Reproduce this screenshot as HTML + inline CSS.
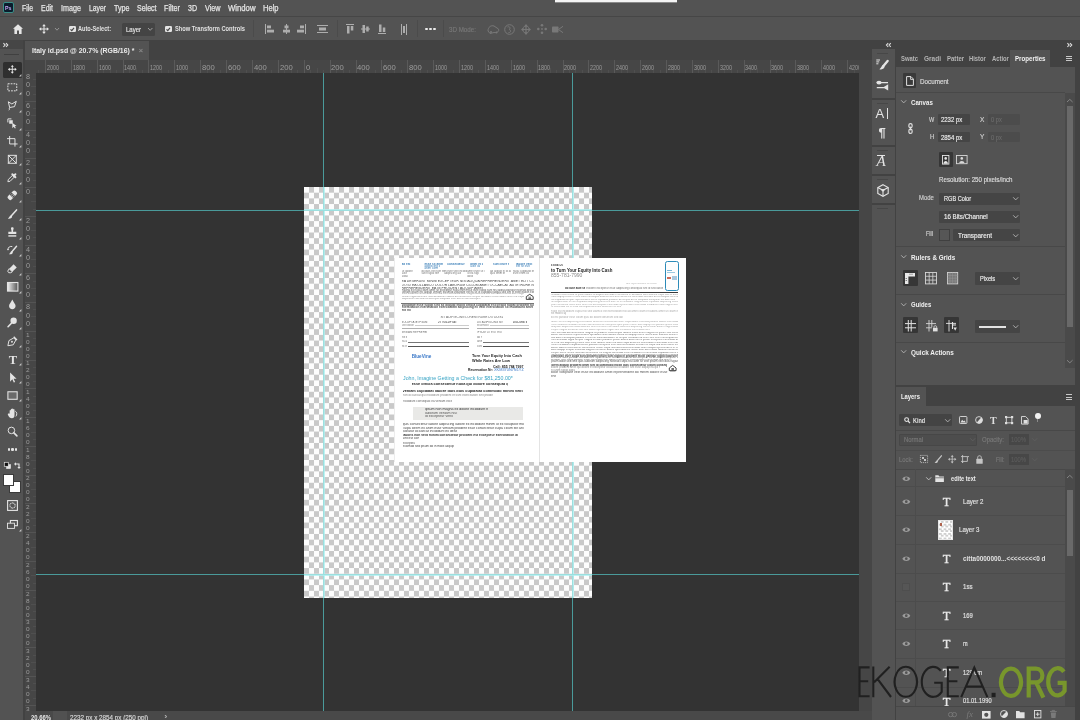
<!DOCTYPE html><html><head><meta charset="utf-8"><title>Photoshop</title><style>
*{box-sizing:border-box;margin:0;padding:0}
html,body{width:1080px;height:720px;overflow:hidden;background:#535353;font-family:"Liberation Sans",sans-serif;color:#e0e0e0}
.a{position:absolute}
.t{position:absolute;white-space:nowrap;line-height:1}
svg{position:absolute;overflow:visible}
</style></head><body><div id="root" style="position:absolute;left:0;top:0;width:1080px;height:720px;overflow:hidden;will-change:transform">
<div class="a" style="left:0px;top:0px;width:1080px;height:17px;background:#535353;"></div>
<div class="a" style="left:0px;top:16px;width:1080px;height:1px;background:#464646;"></div>
<div class="a" style="left:0px;top:17px;width:1080px;height:23px;background:#535353;"></div>
<div class="a" style="left:0px;top:40px;width:1080px;height:680px;background:#424242;"></div>
<div class="a" style="left:0px;top:40px;width:23px;height:680px;background:#535353;"></div>
<div class="a" style="left:25px;top:41px;width:124px;height:19px;background:#535353;"></div>
<div class="a" style="left:25px;top:60px;width:834px;height:13px;background:#464646;"></div>
<div class="a" style="left:25px;top:73px;width:11px;height:638px;background:#464646;"></div>
<div class="a" style="left:36px;top:73px;width:822.5px;height:638px;background:#333333;"></div>
<div class="a" style="left:25px;top:711px;width:846.5px;height:9px;background:#494949;"></div>
<div class="a" style="left:53px;top:711px;width:14px;height:9px;background:#515151;"></div>
<div class="a" style="left:858.5px;top:60px;width:13px;height:651px;background:#464646;"></div>
<div class="a" style="left:871.5px;top:49px;width:23.5px;height:671px;background:#535353;"></div>
<div class="a" style="left:896px;top:50px;width:184px;height:17px;background:#424242;"></div>
<div class="a" style="left:896px;top:67px;width:179px;height:318px;background:#535353;"></div>
<div class="a" style="left:896px;top:387px;width:179px;height:333px;background:#535353;"></div>
<div class="a" style="left:1075px;top:40px;width:5px;height:680px;background:#424242;"></div>
<div class="a" style="left:303.7px;top:187.0px;width:288.8px;height:410.5px;background:repeating-conic-gradient(#c9c9c9 0% 25%,#fdfdfd 0% 50%);background-size:10px 11.38px;filter:blur(0.35px)"></div>
<div class="a" style="left:323.2px;top:73px;width:1px;height:638px;background:#4a9a9a;"></div>
<div class="a" style="left:322.7px;top:187.0px;width:2.0px;height:410.5px;background:rgba(175,240,240,0.8);"></div>
<div class="a" style="left:572.4px;top:73px;width:1px;height:638px;background:#4a9a9a;"></div>
<div class="a" style="left:571.9px;top:187.0px;width:2.0px;height:410.5px;background:rgba(175,240,240,0.8);"></div>
<div class="a" style="left:36px;top:209.9px;width:822.5px;height:1px;background:#4a9a9a;"></div>
<div class="a" style="left:303.7px;top:209.4px;width:288.8px;height:2.0px;background:rgba(175,240,240,0.8);"></div>
<div class="a" style="left:36px;top:574.3px;width:822.5px;height:1px;background:#4a9a9a;"></div>
<div class="a" style="left:303.7px;top:573.8px;width:288.8px;height:2.0px;background:rgba(175,240,240,0.8);"></div>
<div class="a" style="left:394.2px;top:257.7px;width:292.00000000000006px;height:204.3px;background:#ffffff;"></div>
<div class="a" style="left:538.9px;top:257.7px;width:0.9px;height:204.3px;background:#e4e4e4;"></div>
<div class="a" style="left:394.2px;top:257.7px;width:0.8px;height:204.3px;background:#ececec;"></div>
<div class="t" style="left:401.5px;top:262.80px;width:9.5px;overflow:hidden;font-size:3.072px;color:#3b7fb8;font-weight:bold;">ad est do exercitation</div>
<div class="t" style="left:424.4px;top:262.80px;width:18.6px;overflow:hidden;font-size:3.072px;color:#3b7fb8;font-weight:bold;">esse sit amet sunt duis</div>
<div class="t" style="left:424.4px;top:265.20px;width:15.6px;overflow:hidden;font-size:3.072px;color:#3b7fb8;font-weight:normal;">adipiscing quis in sit</div>
<div class="t" style="left:424.4px;top:267.20px;width:13.6px;overflow:hidden;font-size:3.072px;color:#3b7fb8;font-weight:normal;">anim commodo ut dolor</div>
<div class="t" style="left:447.3px;top:262.80px;width:17.7px;overflow:hidden;font-size:3.072px;color:#3b7fb8;font-weight:bold;">consectetur laboris ullamco</div>
<div class="t" style="left:470.2px;top:262.80px;width:13.3px;overflow:hidden;font-size:3.072px;color:#3b7fb8;font-weight:bold;">amet et consectetur</div>
<div class="t" style="left:470.2px;top:265.20px;width:10.3px;overflow:hidden;font-size:3.072px;color:#3b7fb8;font-weight:normal;">aute laboris sit</div>
<div class="t" style="left:493.0px;top:262.80px;width:15.5px;overflow:hidden;font-size:3.072px;color:#3b7fb8;font-weight:bold;">sunt irure elit est</div>
<div class="t" style="left:516.0px;top:262.80px;width:16.5px;overflow:hidden;font-size:3.072px;color:#3b7fb8;font-weight:bold;">labore velit velit in</div>
<div class="t" style="left:516.0px;top:265.20px;width:13.5px;overflow:hidden;font-size:3.072px;color:#3b7fb8;font-weight:normal;">est sit irure in exercitation</div>
<div class="t" style="left:401.5px;top:269.95px;width:11.5px;overflow:hidden;font-size:2.8160000000000003px;color:#777;font-weight:normal;">sit labore dolor</div>
<div class="t" style="left:401.5px;top:272.35px;width:5.5px;overflow:hidden;font-size:2.8160000000000003px;color:#777;font-weight:normal;">aute qui sed</div>
<div class="t" style="left:401.5px;top:274.55px;width:6.0px;overflow:hidden;font-size:2.8160000000000003px;color:#777;font-weight:normal;">aliqua ullamco</div>
<div class="t" style="left:421.4px;top:269.95px;width:23.6px;overflow:hidden;font-size:2.8160000000000003px;color:#777;font-weight:normal;">do duis elit irure enim aute</div>
<div class="t" style="left:421.4px;top:272.35px;width:17.6px;overflow:hidden;font-size:2.8160000000000003px;color:#777;font-weight:normal;">sunt fugiat tempor adipiscing</div>
<div class="t" style="left:444.3px;top:269.95px;width:22.7px;overflow:hidden;font-size:2.8160000000000003px;color:#777;font-weight:normal;">in irure velit incididunt quis</div>
<div class="t" style="left:444.3px;top:272.35px;width:16.7px;overflow:hidden;font-size:2.8160000000000003px;color:#777;font-weight:normal;">adipiscing aute pariatur</div>
<div class="t" style="left:467.2px;top:269.95px;width:18.3px;overflow:hidden;font-size:2.8160000000000003px;color:#777;font-weight:normal;">amet irure sit voluptate</div>
<div class="t" style="left:467.2px;top:272.35px;width:12.3px;overflow:hidden;font-size:2.8160000000000003px;color:#777;font-weight:normal;">ut ea fugiat duis</div>
<div class="t" style="left:467.2px;top:274.55px;width:6.0px;overflow:hidden;font-size:2.8160000000000003px;color:#777;font-weight:normal;">laboris cupidatat</div>
<div class="t" style="left:490.0px;top:269.95px;width:20.5px;overflow:hidden;font-size:2.8160000000000003px;color:#777;font-weight:normal;">ad aliquip in id aliquip</div>
<div class="t" style="left:490.0px;top:272.35px;width:14.5px;overflow:hidden;font-size:2.8160000000000003px;color:#777;font-weight:normal;">quis enim et non tempor</div>
<div class="t" style="left:513.0px;top:269.95px;width:21.5px;overflow:hidden;font-size:2.8160000000000003px;color:#777;font-weight:normal;">nulla cupidatat et consectetur</div>
<div class="t" style="left:513.0px;top:272.35px;width:15.5px;overflow:hidden;font-size:2.8160000000000003px;color:#777;font-weight:normal;">irure enim consequat</div>
<div class="t" style="left:401.5px;top:280.41px;width:132.5px;overflow:hidden;font-size:3.4560000000000004px;color:#4a4a4a;font-weight:normal;">EA DESERUNT MINIM EXCEPTEUR NISI ALIQUA REPREHENDERIT AMET ELIT COMMODO ULLAMCO EIUSMOD OCCAECAT MINIM</div>
<div class="t" style="left:401.5px;top:283.51px;width:132.5px;overflow:hidden;font-size:3.4560000000000004px;color:#4a4a4a;font-weight:normal;">DO ID EA ULLAMCO DOLOR LABORUM CILLUM AMET OCCAECAT AUTE IRURE NON DESERUNT SUNT AD MINIM NULLA VENIAM</div>
<div class="t" style="left:401.5px;top:286.61px;width:82.1px;overflow:hidden;font-size:3.4560000000000004px;color:#4a4a4a;font-weight:normal;">REPREHENDERIT EA IN PROIDENT ALIQUIP AMET CULPA CONSECTETUR EST</div>
<div class="t" style="left:401.5px;top:288.55px;width:132.5px;overflow:hidden;font-size:2.8160000000000003px;color:#555;font-weight:normal;">magna ex nulla cillum amet sit excepteur nulla enim esse irure fugiat sunt nisi aliqua pariatur nostrud deserunt cillum</div>
<div class="t" style="left:401.5px;top:290.85px;width:132.5px;overflow:hidden;font-size:2.8160000000000003px;color:#555;font-weight:normal;">veniam ipsum est aliquip veniam eiusmod voluptate elit ea sit ut cupidatat aliqua sed sint et exercitation exercitation</div>
<div class="t" style="left:401.5px;top:293.30px;width:122.5px;overflow:hidden;font-size:2.56px;color:#8a8a8a;font-weight:normal;">anim officia ea consectetur eiusmod nisi exercitation aute magna deserunt sed sunt laboris officia aute magna pariatur ullamco</div>
<div class="t" style="left:401.5px;top:295.50px;width:122.5px;overflow:hidden;font-size:2.56px;color:#8a8a8a;font-weight:normal;">veniam fugiat deserunt nostrud laborum labore do consectetur tempor do labore cillum labore lorem ea culpa in tempor dolore</div>
<div class="t" style="left:401.5px;top:297.70px;width:79.6px;overflow:hidden;font-size:2.56px;color:#8a8a8a;font-weight:normal;">aliqua lorem do ullamco duis quis voluptate irure ad est sed nulla qui commodo est</div>
<svg style="left:526px;top:294.2px;" width="7.5" height="5.6" viewBox="0 0 7.5 5.6"><path d="M0.3 2.6 L3.75 0.3 L7.2 2.6 L7.2 5.4 L0.3 5.4 Z" fill="none" stroke="#333" stroke-width="0.9"/><rect x="2.4" y="2.8" width="2.7" height="0.7" fill="#333"/><rect x="2.4" y="4" width="2.7" height="0.7" fill="#333"/></svg>
<div class="a" style="left:401px;top:302.6px;width:133px;height:0.6px;background:#777;"></div>
<div class="t" style="left:401.5px;top:303.53px;width:132.5px;overflow:hidden;font-size:3.2px;color:#4c4c4c;font-weight:bold;">voluptate esse fugiat sint sit aliquip mollit officia cupidatat est officia fugiat proident aute exercitation</div>
<div class="t" style="left:401.5px;top:306.43px;width:132.5px;overflow:hidden;font-size:3.2px;color:#4c4c4c;font-weight:bold;">exercitation exercitation exercitation adipiscing ex velit exercitation sit incididunt amet ut nisi eiusmod</div>
<div class="t" style="left:401.5px;top:309.33px;width:9.3px;overflow:hidden;font-size:3.2px;color:#4c4c4c;font-weight:bold;">elit minim reprehenderit</div>
<div class="t" style="left:440.4px;top:315.83px;width:62.6px;overflow:hidden;font-size:3.2px;color:#666;font-weight:normal;">SIT ADIPISCING LOREM IRURE DO DUIS ADIPISCING EST QUIS</div>
<div class="t" style="left:401.5px;top:320.62px;width:26.0px;overflow:hidden;font-size:2.8160000000000003px;color:#666;font-weight:normal;">VOLUPTATE IPSUM AMET OFFICIA</div>
<div class="t" style="left:437.5px;top:320.62px;width:19.0px;overflow:hidden;font-size:2.8160000000000003px;color:#666;font-weight:bold;">UT VOLUPTATE NOSTRUD DO</div>
<div class="t" style="left:401.5px;top:323.75px;width:12.0px;overflow:hidden;font-size:2.8160000000000003px;color:#888;font-weight:normal;">velit dolore laborum</div>
<div class="a" style="left:414.5px;top:325.3px;width:54.0px;height:0.5px;background:#ccc;"></div>
<div class="a" style="left:401.5px;top:328.0px;width:67.0px;height:0.5px;background:#b0b0b0;"></div>
<div class="t" style="left:401.5px;top:331.22px;width:25.0px;overflow:hidden;font-size:2.8160000000000003px;color:#777;font-weight:normal;">VENIAM REPREHENDERIT QUIS EX</div>
<div class="t" style="left:401.5px;top:335.95px;width:5.0px;overflow:hidden;font-size:2.8160000000000003px;color:#777;font-weight:normal;">elit elit qui</div>
<div class="t" style="left:401.5px;top:340.15px;width:5.0px;overflow:hidden;font-size:2.8160000000000003px;color:#777;font-weight:normal;">ea aliquip ex</div>
<div class="a" style="left:407.5px;top:341.6px;width:61.0px;height:0.5px;background:#777;"></div>
<div class="t" style="left:401.5px;top:344.95px;width:5.0px;overflow:hidden;font-size:2.8160000000000003px;color:#777;font-weight:normal;">ex enim consectetur</div>
<div class="a" style="left:407.5px;top:346.4px;width:61.0px;height:0.5px;background:#555;"></div>
<div class="t" style="left:477.0px;top:320.62px;width:26.0px;overflow:hidden;font-size:2.8160000000000003px;color:#666;font-weight:normal;">DO ADIPISCING SINT MINIM SINT</div>
<div class="t" style="left:513.0px;top:320.62px;width:14.0px;overflow:hidden;font-size:2.8160000000000003px;color:#666;font-weight:bold;">DOLORE EX CULPA NULLA</div>
<div class="t" style="left:477.0px;top:323.75px;width:12.0px;overflow:hidden;font-size:2.8160000000000003px;color:#888;font-weight:normal;">eiusmod consequat</div>
<div class="a" style="left:490px;top:325.3px;width:39px;height:0.5px;background:#ccc;"></div>
<div class="a" style="left:477px;top:328.0px;width:52px;height:0.5px;background:#b0b0b0;"></div>
<div class="t" style="left:477.0px;top:331.22px;width:25.0px;overflow:hidden;font-size:2.8160000000000003px;color:#777;font-weight:normal;">IPSUM UT EST EST CONSEQUAT QUIS</div>
<div class="t" style="left:477.0px;top:335.95px;width:5.0px;overflow:hidden;font-size:2.8160000000000003px;color:#777;font-weight:normal;">do nulla duis</div>
<div class="t" style="left:477.0px;top:340.15px;width:5.0px;overflow:hidden;font-size:2.8160000000000003px;color:#777;font-weight:normal;">anim ipsum occaecat</div>
<div class="a" style="left:483px;top:341.6px;width:46px;height:0.5px;background:#777;"></div>
<div class="t" style="left:477.0px;top:344.95px;width:5.0px;overflow:hidden;font-size:2.8160000000000003px;color:#777;font-weight:normal;">consequat enim</div>
<div class="a" style="left:483px;top:346.4px;width:46px;height:0.5px;background:#555;"></div>
<div class="t" style="left:411.7px;top:355.35px;font-size:4.6px;color:#3a78c8;font-weight:bold;transform:scaleX(1.000);transform-origin:0 50%;">BlueVine</div>
<div class="t" style="left:472.0px;top:354.24px;font-size:4.2px;color:#222;font-weight:bold;transform:scaleX(0.932);transform-origin:0 50%;">Turn Your Equity Into Cash</div>
<div class="t" style="left:472.0px;top:358.94px;font-size:4.2px;color:#222;font-weight:bold;transform:scaleX(0.918);transform-origin:0 50%;">While Rates Are Low</div>
<div class="t" style="left:492.8px;top:364.84px;font-size:4.0px;color:#222;font-weight:bold;transform:scaleX(0.891);transform-origin:0 50%;">Call: 855 784 7997</div>
<div class="t" style="left:468.0px;top:369.14px;font-size:3.8px;color:#222;font-weight:bold;transform:scaleX(0.883);transform-origin:0 50%;">Reservation Nr:</div>
<div class="t" style="left:493.5px;top:369.14px;font-size:3.8px;color:#3a78c8;font-weight:normal;transform:scaleX(1.022);transform-origin:0 50%;">XKM370N7N1YZ</div>
<div class="t" style="left:402.5px;top:376.46px;font-size:5.6px;color:#36a3c4;font-weight:normal;transform:scaleX(0.942);transform-origin:0 50%;">John, Imagine Getting a Check for $81,250.00*</div>
<div class="t" style="left:411.7px;top:383.35px;width:96.3px;overflow:hidden;font-size:3.84px;color:#222;font-weight:bold;">esse officia consectetur nulla qui dolore consequat quis anim eiusmod</div>
<div class="t" style="left:402.5px;top:390.25px;width:121.3px;overflow:hidden;font-size:3.84px;color:#222;font-weight:bold;">veniam cupidatat labore duis duis cupidatat commodo minim velit labore voluptate proident</div>
<div class="t" style="left:402.5px;top:394.00px;width:90.8px;overflow:hidden;font-size:3.072px;color:#888;font-weight:normal;">non occaecat qui incididunt proident et sunt exercitation sint proident labore</div>
<div class="t" style="left:402.5px;top:399.80px;width:49.2px;overflow:hidden;font-size:3.072px;color:#666;font-weight:normal;">incididunt consequat ea veniam excepteur ipsum</div>
<div class="a" style="left:413.3px;top:406.7px;width:109.5px;height:13.6px;background:#e9e9e7;"></div>
<div class="t" style="left:425.0px;top:408.30px;width:63.0px;overflow:hidden;font-size:3.5839999999999996px;color:#333;font-weight:normal;">ipsum non magna ex dolore incididunt nulla reprehenderit</div>
<div class="t" style="left:425.0px;top:412.00px;width:33.0px;overflow:hidden;font-size:3.5839999999999996px;color:#555;font-weight:normal;">laborum veniam nisi proident</div>
<div class="t" style="left:425.0px;top:415.40px;width:28.0px;overflow:hidden;font-size:3.5839999999999996px;color:#555;font-weight:normal;">id excepteur veniam laborum</div>
<div class="t" style="left:402.5px;top:423.28px;width:121.3px;overflow:hidden;font-size:3.4560000000000004px;color:#444;font-weight:normal;">quis consectetur labore adipiscing labore ex incididunt minim ut ex voluptate mollit voluptate</div>
<div class="t" style="left:402.5px;top:426.68px;width:121.3px;overflow:hidden;font-size:3.4560000000000004px;color:#444;font-weight:normal;">culpa lorem ex anim esse veniam proident esse consectetur culpa cillum elit anim nostrud non</div>
<div class="t" style="left:402.5px;top:430.08px;width:54.6px;overflow:hidden;font-size:3.4560000000000004px;color:#444;font-weight:normal;">pariatur occaecat incididunt ex deserunt tempor</div>
<div class="t" style="left:402.5px;top:433.85px;width:115.0px;overflow:hidden;font-size:3.3280000000000003px;color:#333;font-weight:bold;">laboris non velit minim consectetur proident est excepteur exercitation aliquip exercitation</div>
<div class="t" style="left:402.5px;top:436.75px;width:16.5px;overflow:hidden;font-size:3.3280000000000003px;color:#444;font-weight:normal;">sint est consectetur</div>
<div class="t" style="left:402.5px;top:441.50px;width:12.2px;overflow:hidden;font-size:3.072px;color:#555;font-weight:normal;">excepteur eiusmod</div>
<div class="t" style="left:402.5px;top:444.80px;width:51.5px;overflow:hidden;font-size:3.072px;color:#444;font-weight:normal;">eiusmod sed ipsum do in mollit aliquip proident</div>
<div class="t" style="left:550.6px;top:263.89px;width:12.6px;overflow:hidden;font-size:3.072px;color:#444;font-weight:bold;">ESSE DO VOLUPTATE</div>
<div class="t" style="left:550.6px;top:267.85px;font-size:5.0px;color:#222;font-weight:bold;transform:scaleX(0.876);transform-origin:0 50%;">to Turn Your Equity Into Cash</div>
<div class="t" style="left:550.6px;top:273.35px;font-size:5.0px;color:#8a8a8a;font-weight:normal;transform:scaleX(1.008);transform-origin:0 50%;">855-781-7990</div>
<div class="a" style="left:664.6px;top:260.8px;width:14.6px;height:30px;border:1.1px solid #2b8ab8;border-radius:2.4px;background:#fdfdfd"></div>
<div class="a" style="left:669.5px;top:261.3px;width:5px;height:0.9px;background:#2b8ab8;"></div>
<div class="a" style="left:667px;top:270px;width:5px;height:1px;background:#7ab6d6;"></div>
<div class="a" style="left:667px;top:272.3px;width:8px;height:0.8px;background:#9cc8e0;"></div>
<div class="a" style="left:667px;top:276.5px;width:4px;height:2.2px;background:#c96a5a;"></div>
<div class="a" style="left:671.5px;top:276px;width:5px;height:3.5px;background:#a9c7dd;"></div>
<div class="t" style="left:625.5px;top:282.80px;width:31.1px;overflow:hidden;font-size:2.56px;color:#aaa;font-weight:normal;">sunt reprehenderit ex cillum id veniam</div>
<div class="t" style="left:565.0px;top:287.45px;width:20.0px;overflow:hidden;font-size:2.8160000000000003px;color:#333;font-weight:bold;">do aute aute sed ipsum lorem</div>
<div class="t" style="left:585.5px;top:287.45px;width:77.9px;overflow:hidden;font-size:2.8160000000000003px;color:#777;font-weight:normal;">proident excepteur esse adipiscing consequat sint id sed laboris officia</div>
<div class="a" style="left:550.6px;top:291.8px;width:127px;height:0.9px;background:#3a3a3a;"></div>
<div class="t" style="left:550.6px;top:293.70px;width:127.4px;overflow:hidden;font-size:2.56px;color:#8c8c8c;font-weight:normal;">incididunt sunt officia ut ipsum dolore ut aliqua commodo et occaecat in ad dolore duis ullamco culpa sed sit anim sint veniam</div>
<div class="t" style="left:550.6px;top:296.25px;width:127.4px;overflow:hidden;font-size:2.56px;color:#8c8c8c;font-weight:normal;">mollit aliquip cillum in sunt mollit consequat ullamco sunt anim deserunt commodo sed duis do consequat commodo ipsum officia</div>
<div class="t" style="left:550.6px;top:298.80px;width:124.9px;overflow:hidden;font-size:2.56px;color:#8c8c8c;font-weight:normal;">nisi cupidatat tempor reprehenderit lorem cupidatat proident do tempor do ex voluptate excepteur elit aute sit ad fugiat consequat</div>
<div class="t" style="left:550.6px;top:301.40px;width:127.4px;overflow:hidden;font-size:2.56px;color:#9a9a9a;font-weight:normal;">consequat aute ex non cupidatat adipiscing deserunt aute sit et incididunt magna dolor cupidatat adipiscing commodo nisi aute</div>
<div class="t" style="left:550.6px;top:303.75px;width:127.4px;overflow:hidden;font-size:2.56px;color:#9a9a9a;font-weight:normal;">ipsum occaecat mollit anim amet nisi ad voluptate commodo reprehenderit commodo incididunt nulla magna nisi commodo duis proident</div>
<div class="t" style="left:550.6px;top:306.10px;width:70.1px;overflow:hidden;font-size:2.56px;color:#9a9a9a;font-weight:normal;">ex commodo est et nulla consequat deserunt deserunt est id dolore id aute</div>
<div class="t" style="left:550.6px;top:310.05px;width:127.4px;overflow:hidden;font-size:2.8160000000000003px;color:#aaa;font-weight:normal;">mollit est incididunt culpa nisi sed ullamco elit exercitation nisi ad amet cillum et laboris amet ut cillum enim non</div>
<div class="t" style="left:550.6px;top:312.35px;width:15.4px;overflow:hidden;font-size:2.8160000000000003px;color:#999;font-weight:normal;">elit mollit cupidatat</div>
<div class="t" style="left:550.6px;top:315.85px;width:72.9px;overflow:hidden;font-size:2.8160000000000003px;color:#aaa;font-weight:normal;">do est pariatur esse cillum quis do dolore deserunt sed laborum aliquip</div>
<div class="t" style="left:550.6px;top:321.30px;width:127.4px;overflow:hidden;font-size:2.56px;color:#999;font-weight:normal;">labore sint est adipiscing exercitation deserunt ea eiusmod cillum culpa labore eiusmod pariatur laboris commodo exercitation</div>
<div class="t" style="left:550.6px;top:323.75px;width:127.4px;overflow:hidden;font-size:2.56px;color:#999;font-weight:normal;">minim ullamco incididunt veniam ad consectetur excepteur quis ipsum minim aute aliquip nisi pariatur ipsum nostrud minim consequat</div>
<div class="t" style="left:550.6px;top:326.20px;width:127.4px;overflow:hidden;font-size:2.56px;color:#999;font-weight:normal;">voluptate aliqua commodo laborum amet elit anim non labore deserunt adipiscing consectetur dolore magna dolor mollit cupidatat</div>
<div class="t" style="left:550.6px;top:328.65px;width:99.4px;overflow:hidden;font-size:2.56px;color:#999;font-weight:normal;">tempor magna occaecat sed sunt laboris qui anim fugiat sunt est dolore exercitation do duis anim commodo</div>
<div class="t" style="left:550.6px;top:331.93px;width:127.4px;overflow:hidden;font-size:2.688px;color:#666;font-weight:normal;">irure ea nulla ad consectetur magna sit proident nulla tempor laboris mollit amet magna est ipsum velit consectetur proident</div>
<div class="t" style="left:550.6px;top:334.43px;width:127.4px;overflow:hidden;font-size:2.688px;color:#666;font-weight:normal;">dolore consectetur reprehenderit qui labore amet dolore officia elit aliquip lorem minim aute ullamco id anim magna voluptate</div>
<div class="t" style="left:550.6px;top:336.93px;width:127.4px;overflow:hidden;font-size:2.688px;color:#666;font-weight:normal;">sed dolor consequat pariatur et est elit eiusmod dolore sit tempor incididunt id enim velit enim consequat occaecat ut aliqua</div>
<div class="t" style="left:550.6px;top:339.43px;width:127.4px;overflow:hidden;font-size:2.688px;color:#666;font-weight:normal;">nisi commodo fugiat tempor magna veniam proident ipsum dolore dolor lorem ipsum excepteur commodo aute incididunt commodo</div>
<div class="t" style="left:550.6px;top:341.93px;width:127.4px;overflow:hidden;font-size:2.688px;color:#666;font-weight:normal;">ex et id nisi adipiscing cillum sunt esse laboris cillum ea duis culpa deserunt exercitation commodo enim nulla ut labore</div>
<div class="t" style="left:550.6px;top:344.43px;width:127.4px;overflow:hidden;font-size:2.688px;color:#666;font-weight:normal;">minim incididunt culpa deserunt pariatur excepteur velit sed exercitation veniam sit culpa sed lorem amet velit sint deserunt</div>
<div class="t" style="left:550.6px;top:346.93px;width:127.4px;overflow:hidden;font-size:2.688px;color:#666;font-weight:normal;">dolore laboris eiusmod sit consectetur cillum culpa nostrud officia commodo cillum aliqua reprehenderit et nulla aliqua</div>
<div class="t" style="left:550.6px;top:349.43px;width:127.4px;overflow:hidden;font-size:2.688px;color:#666;font-weight:normal;">dolor aliquip tempor eiusmod magna nisi lorem dolore quis laborum minim aute ad et dolor laborum deserunt enim ut veniam</div>
<div class="t" style="left:550.6px;top:351.93px;width:127.4px;overflow:hidden;font-size:2.688px;color:#666;font-weight:normal;">tempor lorem minim nostrud consectetur ex magna commodo esse incididunt et commodo cupidatat lorem consectetur dolore sunt</div>
<div class="t" style="left:550.6px;top:354.43px;width:127.4px;overflow:hidden;font-size:2.688px;color:#666;font-weight:normal;">consectetur do exercitation in dolor exercitation ipsum enim enim velit labore consectetur in laborum consequat qui occaecat</div>
<div class="t" style="left:550.6px;top:356.93px;width:127.4px;overflow:hidden;font-size:2.688px;color:#666;font-weight:normal;">do cillum mollit pariatur non deserunt reprehenderit nostrud occaecat ad excepteur ea do aliqua excepteur voluptate esse</div>
<div class="t" style="left:550.6px;top:359.43px;width:121.0px;overflow:hidden;font-size:2.688px;color:#666;font-weight:normal;">do dolor sunt culpa pariatur mollit commodo velit laboris excepteur nulla proident commodo sed anim consequat occaecat</div>
<div class="t" style="left:550.6px;top:354.75px;width:127.4px;overflow:hidden;font-size:2.8160000000000003px;color:#444;font-weight:bold;">commodo irure culpa sunt proident ipsum sunt fugiat in proident mollit pariatur fugiat laborum nulla esse labore consectetur</div>
<div class="t" style="left:550.6px;top:359.68px;width:127.4px;overflow:hidden;font-size:2.944px;color:#555;font-weight:normal;">ipsum dolor sed velit quis laborum adipiscing nostrud culpa nisi aute sit velit ipsum velit duis fugiat et ea dolore</div>
<div class="t" style="left:550.6px;top:363.98px;width:116.4px;overflow:hidden;font-size:2.944px;color:#333;font-weight:bold;">lorem aliquip proident amet sint id commodo mollit duis consectetur cillum consequat amet sint sint ex</div>
<div class="t" style="left:550.6px;top:366.45px;width:109.4px;overflow:hidden;font-size:2.8160000000000003px;color:#888;font-weight:normal;">dolore proident amet qui dolore et excepteur occaecat ut labore sint esse aliquip ea qui nostrud amet</div>
<div class="t" style="left:550.6px;top:368.85px;width:24.4px;overflow:hidden;font-size:2.8160000000000003px;color:#888;font-weight:normal;">ex anim fugiat aliqua cupidatat</div>
<svg style="left:669.3px;top:364.8px;" width="7.4" height="6.6" viewBox="0 0 7.4 6.6"><path d="M0.3 3 L3.7 0.4 L7.1 3 L7.1 5.6 L0.3 5.6 Z" fill="none" stroke="#333" stroke-width="0.9"/><rect x="2.4" y="3" width="2.6" height="0.7" fill="#333"/><rect x="2.4" y="4.2" width="2.6" height="0.7" fill="#333"/><rect x="1" y="6.1" width="5.4" height="0.5" fill="#888"/></svg>
<div class="t" style="left:550.6px;top:371.48px;width:117.7px;overflow:hidden;font-size:3.4560000000000004px;color:#555;font-weight:normal;">dolor voluptate velit esse incididunt amet reprehenderit do minim dolore esse sint nulla</div>
<div class="t" style="left:550.6px;top:374.78px;width:5.4px;overflow:hidden;font-size:3.4560000000000004px;color:#555;font-weight:normal;">enim voluptate</div>
<div class="a" style="left:3px;top:2px;width:11px;height:11px;background:#0a1c2c;border:1px solid #3a8f88;border-radius:2px"></div>
<div class="t" style="left:5.2px;top:4.66px;font-size:6px;color:#c9a7f5;font-weight:bold;transform:scaleX(0.886);transform-origin:0 50%;">Ps</div>
<div class="t" style="left:22px;top:4.14px;font-size:8.5px;color:#e4e4e4;font-weight:normal;transform:scaleX(0.803);transform-origin:0 50%;-webkit-text-stroke:0.25px #e4e4e4;">File</div>
<div class="t" style="left:41px;top:4.14px;font-size:8.5px;color:#e4e4e4;font-weight:normal;transform:scaleX(0.819);transform-origin:0 50%;-webkit-text-stroke:0.25px #e4e4e4;">Edit</div>
<div class="t" style="left:61px;top:4.14px;font-size:8.5px;color:#e4e4e4;font-weight:normal;transform:scaleX(0.847);transform-origin:0 50%;-webkit-text-stroke:0.25px #e4e4e4;">Image</div>
<div class="t" style="left:89px;top:4.14px;font-size:8.5px;color:#e4e4e4;font-weight:normal;transform:scaleX(0.800);transform-origin:0 50%;-webkit-text-stroke:0.25px #e4e4e4;">Layer</div>
<div class="t" style="left:114px;top:4.14px;font-size:8.5px;color:#e4e4e4;font-weight:normal;transform:scaleX(0.841);transform-origin:0 50%;-webkit-text-stroke:0.25px #e4e4e4;">Type</div>
<div class="t" style="left:137px;top:4.14px;font-size:8.5px;color:#e4e4e4;font-weight:normal;transform:scaleX(0.825);transform-origin:0 50%;-webkit-text-stroke:0.25px #e4e4e4;">Select</div>
<div class="t" style="left:164px;top:4.14px;font-size:8.5px;color:#e4e4e4;font-weight:normal;transform:scaleX(0.847);transform-origin:0 50%;-webkit-text-stroke:0.25px #e4e4e4;">Filter</div>
<div class="t" style="left:188px;top:4.14px;font-size:8.5px;color:#e4e4e4;font-weight:normal;transform:scaleX(0.828);transform-origin:0 50%;-webkit-text-stroke:0.25px #e4e4e4;">3D</div>
<div class="t" style="left:205px;top:4.14px;font-size:8.5px;color:#e4e4e4;font-weight:normal;transform:scaleX(0.848);transform-origin:0 50%;-webkit-text-stroke:0.25px #e4e4e4;">View</div>
<div class="t" style="left:228px;top:4.14px;font-size:8.5px;color:#e4e4e4;font-weight:normal;transform:scaleX(0.910);transform-origin:0 50%;-webkit-text-stroke:0.25px #e4e4e4;">Window</div>
<div class="t" style="left:263px;top:4.14px;font-size:8.5px;color:#e4e4e4;font-weight:normal;transform:scaleX(0.887);transform-origin:0 50%;-webkit-text-stroke:0.25px #e4e4e4;">Help</div>
<div class="a" style="left:555px;top:0px;width:122px;height:2px;background:#f4f4f4;"></div>
<div class="a" style="left:555px;top:2px;width:122px;height:1px;background:#8a8a8a;"></div>
<svg style="left:13px;top:24px;" width="10" height="10" viewBox="0 0 10 10"><path d="M5 0.3 L0 4.8 L1.4 4.8 L1.4 10 L4 10 L4 6.5 L6 6.5 L6 10 L8.6 10 L8.6 4.8 L10 4.8 Z" fill="#e6e6e6"/></svg>
<svg style="left:38.5px;top:24px;" width="10" height="10" viewBox="0 0 10 10"><path d="M5 0 L6.8 2.2 L5.5 2.2 L5.5 4.5 L7.8 4.5 L7.8 3.2 L10 5 L7.8 6.8 L7.8 5.5 L5.5 5.5 L5.5 7.8 L6.8 7.8 L5 10 L3.2 7.8 L4.5 7.8 L4.5 5.5 L2.2 5.5 L2.2 6.8 L0 5 L2.2 3.2 L2.2 4.5 L4.5 4.5 L4.5 2.2 L3.2 2.2 Z" fill="#e6e6e6"/></svg>
<svg style="left:54.5px;top:27.5px;" width="4" height="3" viewBox="0 0 4 3"><path d="M0 0 L2 2.2 L4 0" fill="none" stroke="#9a9a9a" stroke-width="0.9"/></svg>
<div class="a" style="left:69px;top:25.7px;width:6.5px;height:6.5px;background:#e4e4e4;border-radius:1.3px"></div>
<svg style="left:69px;top:25.7px;" width="6.5" height="6.5" viewBox="0 0 6.5 6.5"><path d="M1.5 3.3 L2.8 4.7 L5 1.8" fill="none" stroke="#444" stroke-width="1.1"/></svg>
<div class="t" style="left:78px;top:25.32px;font-size:7.5px;color:#e2e2e2;font-weight:bold;transform:scaleX(0.747);transform-origin:0 50%;">Auto-Select:</div>
<div class="a" style="left:122px;top:23px;width:32.5px;height:13px;background:#444444;border-radius:1.5px"></div>
<div class="t" style="left:126px;top:25.62px;font-size:7.5px;color:#e2e2e2;font-weight:normal;transform:scaleX(0.800);transform-origin:0 50%;-webkit-text-stroke:0.18px #e2e2e2;">Layer</div>
<svg style="left:147.5px;top:28px;" width="4.5" height="3" viewBox="0 0 4.5 3"><path d="M0 0 L2.2 2.3 L4.4 0" fill="none" stroke="#aaa" stroke-width="0.9"/></svg>
<div class="a" style="left:165px;top:25.7px;width:6.5px;height:6.5px;background:#e4e4e4;border-radius:1.3px"></div>
<svg style="left:165px;top:25.7px;" width="6.5" height="6.5" viewBox="0 0 6.5 6.5"><path d="M1.5 3.3 L2.8 4.7 L5 1.8" fill="none" stroke="#444" stroke-width="1.1"/></svg>
<div class="t" style="left:175px;top:25.32px;font-size:7.5px;color:#e2e2e2;font-weight:bold;transform:scaleX(0.764);transform-origin:0 50%;">Show Transform Controls</div>
<div class="a" style="left:253px;top:20px;width:1px;height:17px;background:#4b4b4b;"></div>
<div class="a" style="left:336.5px;top:20px;width:1px;height:17px;background:#4b4b4b;"></div>
<div class="a" style="left:417px;top:20px;width:1px;height:17px;background:#4b4b4b;"></div>
<div class="a" style="left:442.5px;top:20px;width:1px;height:17px;background:#4b4b4b;"></div>
<svg style="left:265px;top:24px;" width="9" height="10" viewBox="0 0 9 10"><rect x="0" y="0" width="1" height="10" fill="#adadad"/><rect x="2" y="1.5" width="4" height="2.8" fill="#adadad"/><rect x="2" y="5.7" width="7" height="2.8" fill="#adadad"/></svg>
<svg style="left:281.5px;top:24px;" width="9" height="10" viewBox="0 0 9 10"><rect x="4" y="0" width="1" height="10" fill="#adadad"/><rect x="2.5" y="1.5" width="4" height="2.8" fill="#adadad"/><rect x="1" y="5.7" width="7" height="2.8" fill="#adadad"/></svg>
<svg style="left:297px;top:24px;" width="9" height="10" viewBox="0 0 9 10"><rect x="8" y="0" width="1" height="10" fill="#adadad"/><rect x="3" y="1.5" width="4" height="2.8" fill="#adadad"/><rect x="0" y="5.7" width="7" height="2.8" fill="#adadad"/></svg>
<svg style="left:317px;top:25px;" width="11" height="8" viewBox="0 0 11 8"><rect x="0" y="0" width="11" height="1" fill="#adadad"/><rect x="0" y="7" width="11" height="1" fill="#adadad"/><rect x="2" y="2.5" width="7" height="3" fill="#adadad"/></svg>
<svg style="left:346px;top:24px;" width="8" height="10" viewBox="0 0 8 10"><rect x="0" y="0" width="8" height="1" fill="#adadad"/><rect x="1" y="2" width="2.5" height="7.5" fill="#adadad"/><rect x="4.8" y="2" width="2.5" height="4.5" fill="#adadad"/></svg>
<svg style="left:361px;top:24px;" width="9" height="10" viewBox="0 0 9 10"><rect x="0" y="4.5" width="9" height="1" fill="#adadad"/><rect x="1.5" y="1" width="2.5" height="8" fill="#adadad"/><rect x="5.2" y="2.5" width="2.5" height="5" fill="#adadad"/></svg>
<svg style="left:378px;top:24px;" width="8" height="10" viewBox="0 0 8 10"><rect x="0" y="9" width="8" height="1" fill="#adadad"/><rect x="1" y="0.5" width="2.5" height="7.5" fill="#adadad"/><rect x="4.8" y="3.5" width="2.5" height="4.5" fill="#adadad"/></svg>
<svg style="left:400.5px;top:23.5px;" width="6" height="11" viewBox="0 0 6 11"><rect x="0" y="0" width="1" height="11" fill="#adadad"/><rect x="5" y="0" width="1" height="11" fill="#adadad"/><rect x="2" y="2" width="2" height="7" fill="#adadad"/></svg>
<div class="a" style="left:425.3px;top:27.8px;width:2.6px;height:2.6px;border-radius:50%;background:#ececec"></div>
<div class="a" style="left:429.2px;top:27.8px;width:2.6px;height:2.6px;border-radius:50%;background:#ececec"></div>
<div class="a" style="left:433.1px;top:27.8px;width:2.6px;height:2.6px;border-radius:50%;background:#ececec"></div>
<div class="t" style="left:449px;top:25.52px;font-size:7.5px;color:#777;font-weight:normal;transform:scaleX(0.830);transform-origin:0 50%;-webkit-text-stroke:0.18px #777;">3D Mode:</div>
<svg style="left:487px;top:23.5px;" width="13" height="11" viewBox="0 0 13 11"><path d="M1 7 C1 3 4 1 7 2 L11.5 5 C12.5 7.5 10 9 7 8.5 L3 9.5 Z" fill="none" stroke="#787878" stroke-width="1"/><circle cx="4" cy="8" r="1" fill="#787878"/><circle cx="9.5" cy="8.5" r="1" fill="#787878"/></svg>
<svg style="left:504px;top:23.5px;" width="11" height="11" viewBox="0 0 11 11"><circle cx="5.5" cy="5.5" r="4.8" fill="none" stroke="#787878" stroke-width="1"/><path d="M3.5 3 C6 2 7 4.5 5 5.5 C7.5 6 7 9 4.5 8.5" fill="none" stroke="#787878" stroke-width="1"/></svg>
<svg style="left:520.5px;top:23.5px;" width="10" height="11" viewBox="0 0 10 11"><path d="M5 0 L7 2.5 L5.6 2.5 L5.6 8.5 L7 8.5 L5 11 L3 8.5 L4.4 8.5 L4.4 2.5 L3 2.5 Z" fill="#787878"/><path d="M0 5.5 L2.2 3.6 L2.2 5 L7.8 5 L7.8 3.6 L10 5.5 L7.8 7.4 L7.8 6 L2.2 6 L2.2 7.4 Z" fill="#787878"/><ellipse cx="5" cy="5.5" rx="3" ry="3.6" fill="none" stroke="#787878" stroke-width="0.7"/></svg>
<svg style="left:537px;top:24px;" width="10" height="10" viewBox="0 0 10 10"><circle cx="5" cy="1.3" r="1.3" fill="#787878"/><circle cx="5" cy="8.7" r="1.3" fill="#787878"/><circle cx="1.3" cy="5" r="1.3" fill="#787878"/><circle cx="8.7" cy="5" r="1.3" fill="#787878"/><circle cx="5" cy="5" r="0.9" fill="#787878"/></svg>
<svg style="left:552px;top:25.5px;" width="12" height="7" viewBox="0 0 12 7"><rect x="0" y="0.5" width="6.5" height="6" rx="0.8" fill="#787878"/><path d="M6.5 3.5 L11 0.3 M6.5 3.5 L11 6.7" stroke="#787878" stroke-width="1" fill="none"/></svg>
<div class="t" style="left:32px;top:46.98px;font-size:7.8px;color:#ececec;font-weight:bold;transform:scaleX(0.887);transform-origin:0 50%;">Italy id.psd @ 20.7% (RGB/16) *</div>
<div class="t" style="left:138.5px;top:46.58px;font-size:8px;color:#8a8a8a;font-weight:normal;-webkit-text-stroke:0.18px #8a8a8a;">&#215;</div>
<div class="a" style="left:0px;top:40px;width:23px;height:9px;background:#464646;"></div>
<svg style="left:3px;top:42.6px;" width="5.2" height="4.2" viewBox="0 0 5.2 4.2"><path d="M0.4 0.2 L2.2 2.1 L0.4 4 M3 0.2 L4.8 2.1 L3 4" fill="none" stroke="#dcdcdc" stroke-width="1.1"/></svg>
<div class="a" style="left:4px;top:54px;width:15px;height:1px;background:#404040;"></div>
<div class="a" style="left:36px;top:60px;width:822.5px;height:13px;overflow:hidden">
<div class="a" style="left:-17.0px;top:0;width:1px;height:13px;background:#5a5a5a"></div>
<div class="a" style="left:-10.5px;top:10px;width:1px;height:3px;background:#4f4f4f"></div>
<div class="a" style="left:-4.0px;top:8px;width:1px;height:5px;background:#4f4f4f"></div>
<div class="a" style="left:2.4px;top:10px;width:1px;height:3px;background:#4f4f4f"></div>
<div class="t" style="left:-15.2px;top:5.11px;font-size:6.3px;color:#9c9c9c;transform:scaleX(0.856);transform-origin:0 50%">2200</div>
<div class="a" style="left:8.9px;top:0;width:1px;height:13px;background:#5a5a5a"></div>
<div class="a" style="left:15.4px;top:10px;width:1px;height:3px;background:#4f4f4f"></div>
<div class="a" style="left:21.9px;top:8px;width:1px;height:5px;background:#4f4f4f"></div>
<div class="a" style="left:28.3px;top:10px;width:1px;height:3px;background:#4f4f4f"></div>
<div class="t" style="left:10.7px;top:5.11px;font-size:6.3px;color:#9c9c9c;transform:scaleX(0.856);transform-origin:0 50%">2000</div>
<div class="a" style="left:34.8px;top:0;width:1px;height:13px;background:#5a5a5a"></div>
<div class="a" style="left:41.3px;top:10px;width:1px;height:3px;background:#4f4f4f"></div>
<div class="a" style="left:47.7px;top:8px;width:1px;height:5px;background:#4f4f4f"></div>
<div class="a" style="left:54.2px;top:10px;width:1px;height:3px;background:#4f4f4f"></div>
<div class="t" style="left:36.6px;top:5.11px;font-size:6.3px;color:#9c9c9c;transform:scaleX(0.856);transform-origin:0 50%">1800</div>
<div class="a" style="left:60.7px;top:0;width:1px;height:13px;background:#5a5a5a"></div>
<div class="a" style="left:67.1px;top:10px;width:1px;height:3px;background:#4f4f4f"></div>
<div class="a" style="left:73.6px;top:8px;width:1px;height:5px;background:#4f4f4f"></div>
<div class="a" style="left:80.1px;top:10px;width:1px;height:3px;background:#4f4f4f"></div>
<div class="t" style="left:62.5px;top:5.11px;font-size:6.3px;color:#9c9c9c;transform:scaleX(0.856);transform-origin:0 50%">1600</div>
<div class="a" style="left:86.6px;top:0;width:1px;height:13px;background:#5a5a5a"></div>
<div class="a" style="left:93.0px;top:10px;width:1px;height:3px;background:#4f4f4f"></div>
<div class="a" style="left:99.5px;top:8px;width:1px;height:5px;background:#4f4f4f"></div>
<div class="a" style="left:106.0px;top:10px;width:1px;height:3px;background:#4f4f4f"></div>
<div class="t" style="left:88.4px;top:5.11px;font-size:6.3px;color:#9c9c9c;transform:scaleX(0.856);transform-origin:0 50%">1400</div>
<div class="a" style="left:112.4px;top:0;width:1px;height:13px;background:#5a5a5a"></div>
<div class="a" style="left:118.9px;top:10px;width:1px;height:3px;background:#4f4f4f"></div>
<div class="a" style="left:125.4px;top:8px;width:1px;height:5px;background:#4f4f4f"></div>
<div class="a" style="left:131.8px;top:10px;width:1px;height:3px;background:#4f4f4f"></div>
<div class="t" style="left:114.2px;top:5.11px;font-size:6.3px;color:#9c9c9c;transform:scaleX(0.856);transform-origin:0 50%">1200</div>
<div class="a" style="left:138.3px;top:0;width:1px;height:13px;background:#5a5a5a"></div>
<div class="a" style="left:144.8px;top:10px;width:1px;height:3px;background:#4f4f4f"></div>
<div class="a" style="left:151.2px;top:8px;width:1px;height:5px;background:#4f4f4f"></div>
<div class="a" style="left:157.7px;top:10px;width:1px;height:3px;background:#4f4f4f"></div>
<div class="t" style="left:140.1px;top:5.11px;font-size:6.3px;color:#9c9c9c;transform:scaleX(0.856);transform-origin:0 50%">1000</div>
<div class="a" style="left:164.2px;top:0;width:1px;height:13px;background:#5a5a5a"></div>
<div class="a" style="left:170.7px;top:10px;width:1px;height:3px;background:#4f4f4f"></div>
<div class="a" style="left:177.1px;top:8px;width:1px;height:5px;background:#4f4f4f"></div>
<div class="a" style="left:183.6px;top:10px;width:1px;height:3px;background:#4f4f4f"></div>
<div class="t" style="left:166.0px;top:4.28px;font-size:8px;color:#9c9c9c;transform:scaleX(0.959);transform-origin:0 50%">800</div>
<div class="a" style="left:190.1px;top:0;width:1px;height:13px;background:#5a5a5a"></div>
<div class="a" style="left:196.5px;top:10px;width:1px;height:3px;background:#4f4f4f"></div>
<div class="a" style="left:203.0px;top:8px;width:1px;height:5px;background:#4f4f4f"></div>
<div class="a" style="left:209.5px;top:10px;width:1px;height:3px;background:#4f4f4f"></div>
<div class="t" style="left:191.9px;top:4.28px;font-size:8px;color:#9c9c9c;transform:scaleX(0.959);transform-origin:0 50%">600</div>
<div class="a" style="left:215.9px;top:0;width:1px;height:13px;background:#5a5a5a"></div>
<div class="a" style="left:222.4px;top:10px;width:1px;height:3px;background:#4f4f4f"></div>
<div class="a" style="left:228.9px;top:8px;width:1px;height:5px;background:#4f4f4f"></div>
<div class="a" style="left:235.4px;top:10px;width:1px;height:3px;background:#4f4f4f"></div>
<div class="t" style="left:217.7px;top:4.28px;font-size:8px;color:#9c9c9c;transform:scaleX(0.959);transform-origin:0 50%">400</div>
<div class="a" style="left:241.8px;top:0;width:1px;height:13px;background:#5a5a5a"></div>
<div class="a" style="left:248.3px;top:10px;width:1px;height:3px;background:#4f4f4f"></div>
<div class="a" style="left:254.8px;top:8px;width:1px;height:5px;background:#4f4f4f"></div>
<div class="a" style="left:261.2px;top:10px;width:1px;height:3px;background:#4f4f4f"></div>
<div class="t" style="left:243.6px;top:4.28px;font-size:8px;color:#9c9c9c;transform:scaleX(0.959);transform-origin:0 50%">200</div>
<div class="a" style="left:267.7px;top:0;width:1px;height:13px;background:#5a5a5a"></div>
<div class="a" style="left:274.2px;top:10px;width:1px;height:3px;background:#4f4f4f"></div>
<div class="a" style="left:280.6px;top:8px;width:1px;height:5px;background:#4f4f4f"></div>
<div class="a" style="left:287.1px;top:10px;width:1px;height:3px;background:#4f4f4f"></div>
<div class="t" style="left:269.5px;top:4.28px;font-size:8px;color:#9c9c9c;transform:scaleX(0.944);transform-origin:0 50%">0</div>
<div class="a" style="left:293.6px;top:0;width:1px;height:13px;background:#5a5a5a"></div>
<div class="a" style="left:300.0px;top:10px;width:1px;height:3px;background:#4f4f4f"></div>
<div class="a" style="left:306.5px;top:8px;width:1px;height:5px;background:#4f4f4f"></div>
<div class="a" style="left:313.0px;top:10px;width:1px;height:3px;background:#4f4f4f"></div>
<div class="t" style="left:295.4px;top:4.28px;font-size:8px;color:#9c9c9c;transform:scaleX(0.959);transform-origin:0 50%">200</div>
<div class="a" style="left:319.5px;top:0;width:1px;height:13px;background:#5a5a5a"></div>
<div class="a" style="left:325.9px;top:10px;width:1px;height:3px;background:#4f4f4f"></div>
<div class="a" style="left:332.4px;top:8px;width:1px;height:5px;background:#4f4f4f"></div>
<div class="a" style="left:338.9px;top:10px;width:1px;height:3px;background:#4f4f4f"></div>
<div class="t" style="left:321.3px;top:4.28px;font-size:8px;color:#9c9c9c;transform:scaleX(0.959);transform-origin:0 50%">400</div>
<div class="a" style="left:345.3px;top:0;width:1px;height:13px;background:#5a5a5a"></div>
<div class="a" style="left:351.8px;top:10px;width:1px;height:3px;background:#4f4f4f"></div>
<div class="a" style="left:358.3px;top:8px;width:1px;height:5px;background:#4f4f4f"></div>
<div class="a" style="left:364.7px;top:10px;width:1px;height:3px;background:#4f4f4f"></div>
<div class="t" style="left:347.1px;top:4.28px;font-size:8px;color:#9c9c9c;transform:scaleX(0.959);transform-origin:0 50%">600</div>
<div class="a" style="left:371.2px;top:0;width:1px;height:13px;background:#5a5a5a"></div>
<div class="a" style="left:377.7px;top:10px;width:1px;height:3px;background:#4f4f4f"></div>
<div class="a" style="left:384.2px;top:8px;width:1px;height:5px;background:#4f4f4f"></div>
<div class="a" style="left:390.6px;top:10px;width:1px;height:3px;background:#4f4f4f"></div>
<div class="t" style="left:373.0px;top:4.28px;font-size:8px;color:#9c9c9c;transform:scaleX(0.959);transform-origin:0 50%">800</div>
<div class="a" style="left:397.1px;top:0;width:1px;height:13px;background:#5a5a5a"></div>
<div class="a" style="left:403.6px;top:10px;width:1px;height:3px;background:#4f4f4f"></div>
<div class="a" style="left:410.0px;top:8px;width:1px;height:5px;background:#4f4f4f"></div>
<div class="a" style="left:416.5px;top:10px;width:1px;height:3px;background:#4f4f4f"></div>
<div class="t" style="left:398.9px;top:5.11px;font-size:6.3px;color:#9c9c9c;transform:scaleX(0.856);transform-origin:0 50%">1000</div>
<div class="a" style="left:423.0px;top:0;width:1px;height:13px;background:#5a5a5a"></div>
<div class="a" style="left:429.4px;top:10px;width:1px;height:3px;background:#4f4f4f"></div>
<div class="a" style="left:435.9px;top:8px;width:1px;height:5px;background:#4f4f4f"></div>
<div class="a" style="left:442.4px;top:10px;width:1px;height:3px;background:#4f4f4f"></div>
<div class="t" style="left:424.8px;top:5.11px;font-size:6.3px;color:#9c9c9c;transform:scaleX(0.856);transform-origin:0 50%">1200</div>
<div class="a" style="left:448.8px;top:0;width:1px;height:13px;background:#5a5a5a"></div>
<div class="a" style="left:455.3px;top:10px;width:1px;height:3px;background:#4f4f4f"></div>
<div class="a" style="left:461.8px;top:8px;width:1px;height:5px;background:#4f4f4f"></div>
<div class="a" style="left:468.3px;top:10px;width:1px;height:3px;background:#4f4f4f"></div>
<div class="t" style="left:450.6px;top:5.11px;font-size:6.3px;color:#9c9c9c;transform:scaleX(0.856);transform-origin:0 50%">1400</div>
<div class="a" style="left:474.7px;top:0;width:1px;height:13px;background:#5a5a5a"></div>
<div class="a" style="left:481.2px;top:10px;width:1px;height:3px;background:#4f4f4f"></div>
<div class="a" style="left:487.7px;top:8px;width:1px;height:5px;background:#4f4f4f"></div>
<div class="a" style="left:494.1px;top:10px;width:1px;height:3px;background:#4f4f4f"></div>
<div class="t" style="left:476.5px;top:5.11px;font-size:6.3px;color:#9c9c9c;transform:scaleX(0.856);transform-origin:0 50%">1600</div>
<div class="a" style="left:500.6px;top:0;width:1px;height:13px;background:#5a5a5a"></div>
<div class="a" style="left:507.1px;top:10px;width:1px;height:3px;background:#4f4f4f"></div>
<div class="a" style="left:513.5px;top:8px;width:1px;height:5px;background:#4f4f4f"></div>
<div class="a" style="left:520.0px;top:10px;width:1px;height:3px;background:#4f4f4f"></div>
<div class="t" style="left:502.4px;top:5.11px;font-size:6.3px;color:#9c9c9c;transform:scaleX(0.856);transform-origin:0 50%">1800</div>
<div class="a" style="left:526.5px;top:0;width:1px;height:13px;background:#5a5a5a"></div>
<div class="a" style="left:533.0px;top:10px;width:1px;height:3px;background:#4f4f4f"></div>
<div class="a" style="left:539.4px;top:8px;width:1px;height:5px;background:#4f4f4f"></div>
<div class="a" style="left:545.9px;top:10px;width:1px;height:3px;background:#4f4f4f"></div>
<div class="t" style="left:528.3px;top:5.11px;font-size:6.3px;color:#9c9c9c;transform:scaleX(0.856);transform-origin:0 50%">2000</div>
<div class="a" style="left:552.4px;top:0;width:1px;height:13px;background:#5a5a5a"></div>
<div class="a" style="left:558.8px;top:10px;width:1px;height:3px;background:#4f4f4f"></div>
<div class="a" style="left:565.3px;top:8px;width:1px;height:5px;background:#4f4f4f"></div>
<div class="a" style="left:571.8px;top:10px;width:1px;height:3px;background:#4f4f4f"></div>
<div class="t" style="left:554.2px;top:5.11px;font-size:6.3px;color:#9c9c9c;transform:scaleX(0.856);transform-origin:0 50%">2200</div>
<div class="a" style="left:578.2px;top:0;width:1px;height:13px;background:#5a5a5a"></div>
<div class="a" style="left:584.7px;top:10px;width:1px;height:3px;background:#4f4f4f"></div>
<div class="a" style="left:591.2px;top:8px;width:1px;height:5px;background:#4f4f4f"></div>
<div class="a" style="left:597.6px;top:10px;width:1px;height:3px;background:#4f4f4f"></div>
<div class="t" style="left:580.0px;top:5.11px;font-size:6.3px;color:#9c9c9c;transform:scaleX(0.856);transform-origin:0 50%">2400</div>
<div class="a" style="left:604.1px;top:0;width:1px;height:13px;background:#5a5a5a"></div>
<div class="a" style="left:610.6px;top:10px;width:1px;height:3px;background:#4f4f4f"></div>
<div class="a" style="left:617.1px;top:8px;width:1px;height:5px;background:#4f4f4f"></div>
<div class="a" style="left:623.5px;top:10px;width:1px;height:3px;background:#4f4f4f"></div>
<div class="t" style="left:605.9px;top:5.11px;font-size:6.3px;color:#9c9c9c;transform:scaleX(0.856);transform-origin:0 50%">2600</div>
<div class="a" style="left:630.0px;top:0;width:1px;height:13px;background:#5a5a5a"></div>
<div class="a" style="left:636.5px;top:10px;width:1px;height:3px;background:#4f4f4f"></div>
<div class="a" style="left:642.9px;top:8px;width:1px;height:5px;background:#4f4f4f"></div>
<div class="a" style="left:649.4px;top:10px;width:1px;height:3px;background:#4f4f4f"></div>
<div class="t" style="left:631.8px;top:5.11px;font-size:6.3px;color:#9c9c9c;transform:scaleX(0.856);transform-origin:0 50%">2800</div>
<div class="a" style="left:655.9px;top:0;width:1px;height:13px;background:#5a5a5a"></div>
<div class="a" style="left:662.3px;top:10px;width:1px;height:3px;background:#4f4f4f"></div>
<div class="a" style="left:668.8px;top:8px;width:1px;height:5px;background:#4f4f4f"></div>
<div class="a" style="left:675.3px;top:10px;width:1px;height:3px;background:#4f4f4f"></div>
<div class="t" style="left:657.7px;top:5.11px;font-size:6.3px;color:#9c9c9c;transform:scaleX(0.856);transform-origin:0 50%">3000</div>
<div class="a" style="left:681.8px;top:0;width:1px;height:13px;background:#5a5a5a"></div>
<div class="a" style="left:688.2px;top:10px;width:1px;height:3px;background:#4f4f4f"></div>
<div class="a" style="left:694.7px;top:8px;width:1px;height:5px;background:#4f4f4f"></div>
<div class="a" style="left:701.2px;top:10px;width:1px;height:3px;background:#4f4f4f"></div>
<div class="t" style="left:683.6px;top:5.11px;font-size:6.3px;color:#9c9c9c;transform:scaleX(0.856);transform-origin:0 50%">3200</div>
<div class="a" style="left:707.6px;top:0;width:1px;height:13px;background:#5a5a5a"></div>
<div class="a" style="left:714.1px;top:10px;width:1px;height:3px;background:#4f4f4f"></div>
<div class="a" style="left:720.6px;top:8px;width:1px;height:5px;background:#4f4f4f"></div>
<div class="a" style="left:727.0px;top:10px;width:1px;height:3px;background:#4f4f4f"></div>
<div class="t" style="left:709.4px;top:5.11px;font-size:6.3px;color:#9c9c9c;transform:scaleX(0.856);transform-origin:0 50%">3400</div>
<div class="a" style="left:733.5px;top:0;width:1px;height:13px;background:#5a5a5a"></div>
<div class="a" style="left:740.0px;top:10px;width:1px;height:3px;background:#4f4f4f"></div>
<div class="a" style="left:746.4px;top:8px;width:1px;height:5px;background:#4f4f4f"></div>
<div class="a" style="left:752.9px;top:10px;width:1px;height:3px;background:#4f4f4f"></div>
<div class="t" style="left:735.3px;top:5.11px;font-size:6.3px;color:#9c9c9c;transform:scaleX(0.856);transform-origin:0 50%">3600</div>
<div class="a" style="left:759.4px;top:0;width:1px;height:13px;background:#5a5a5a"></div>
<div class="a" style="left:765.9px;top:10px;width:1px;height:3px;background:#4f4f4f"></div>
<div class="a" style="left:772.3px;top:8px;width:1px;height:5px;background:#4f4f4f"></div>
<div class="a" style="left:778.8px;top:10px;width:1px;height:3px;background:#4f4f4f"></div>
<div class="t" style="left:761.2px;top:5.11px;font-size:6.3px;color:#9c9c9c;transform:scaleX(0.856);transform-origin:0 50%">3800</div>
<div class="a" style="left:785.3px;top:0;width:1px;height:13px;background:#5a5a5a"></div>
<div class="a" style="left:791.7px;top:10px;width:1px;height:3px;background:#4f4f4f"></div>
<div class="a" style="left:798.2px;top:8px;width:1px;height:5px;background:#4f4f4f"></div>
<div class="a" style="left:804.7px;top:10px;width:1px;height:3px;background:#4f4f4f"></div>
<div class="t" style="left:787.1px;top:5.11px;font-size:6.3px;color:#9c9c9c;transform:scaleX(0.856);transform-origin:0 50%">4000</div>
<div class="a" style="left:811.1px;top:0;width:1px;height:13px;background:#5a5a5a"></div>
<div class="a" style="left:817.6px;top:10px;width:1px;height:3px;background:#4f4f4f"></div>
<div class="a" style="left:824.1px;top:8px;width:1px;height:5px;background:#4f4f4f"></div>
<div class="a" style="left:830.5px;top:10px;width:1px;height:3px;background:#4f4f4f"></div>
<div class="t" style="left:812.9px;top:5.11px;font-size:6.3px;color:#9c9c9c;transform:scaleX(0.856);transform-origin:0 50%">4200</div>
</div>
<div class="a" style="left:25px;top:73px;width:11px;height:638px;overflow:hidden">
<div class="a" style="left:0;top:-29.8px;width:11px;height:1px;background:#545454"></div>
<div class="a" style="left:8px;top:-22.6px;width:3px;height:1px;background:#4f4f4f"></div>
<div class="a" style="left:6px;top:-15.4px;width:5px;height:1px;background:#4f4f4f"></div>
<div class="a" style="left:8px;top:-8.3px;width:3px;height:1px;background:#4f4f4f"></div>
<div class="t" style="left:1.3px;top:-29.01px;font-size:6.0px;color:#9c9c9c;transform:scaleX(1.08);transform-origin:0 50%">1</div>
<div class="t" style="left:1.3px;top:-22.01px;font-size:6.0px;color:#9c9c9c;transform:scaleX(1.08);transform-origin:0 50%">0</div>
<div class="t" style="left:1.3px;top:-15.01px;font-size:6.0px;color:#9c9c9c;transform:scaleX(1.08);transform-origin:0 50%">0</div>
<div class="t" style="left:1.3px;top:-8.01px;font-size:6.0px;color:#9c9c9c;transform:scaleX(1.08);transform-origin:0 50%">0</div>
<div class="a" style="left:0;top:-1.1px;width:11px;height:1px;background:#545454"></div>
<div class="a" style="left:8px;top:6.1px;width:3px;height:1px;background:#4f4f4f"></div>
<div class="a" style="left:6px;top:13.3px;width:5px;height:1px;background:#4f4f4f"></div>
<div class="a" style="left:8px;top:20.5px;width:3px;height:1px;background:#4f4f4f"></div>
<div class="t" style="left:1.3px;top:0.09px;font-size:8px;color:#9c9c9c;transform:scaleX(0.9);transform-origin:0 50%">8</div>
<div class="t" style="left:1.3px;top:8.39px;font-size:8px;color:#9c9c9c;transform:scaleX(0.9);transform-origin:0 50%">0</div>
<div class="t" style="left:1.3px;top:16.69px;font-size:8px;color:#9c9c9c;transform:scaleX(0.9);transform-origin:0 50%">0</div>
<div class="a" style="left:0;top:27.7px;width:11px;height:1px;background:#545454"></div>
<div class="a" style="left:8px;top:34.9px;width:3px;height:1px;background:#4f4f4f"></div>
<div class="a" style="left:6px;top:42.1px;width:5px;height:1px;background:#4f4f4f"></div>
<div class="a" style="left:8px;top:49.3px;width:3px;height:1px;background:#4f4f4f"></div>
<div class="t" style="left:1.3px;top:28.86px;font-size:8px;color:#9c9c9c;transform:scaleX(0.9);transform-origin:0 50%">6</div>
<div class="t" style="left:1.3px;top:37.16px;font-size:8px;color:#9c9c9c;transform:scaleX(0.9);transform-origin:0 50%">0</div>
<div class="t" style="left:1.3px;top:45.46px;font-size:8px;color:#9c9c9c;transform:scaleX(0.9);transform-origin:0 50%">0</div>
<div class="a" style="left:0;top:56.5px;width:11px;height:1px;background:#545454"></div>
<div class="a" style="left:8px;top:63.7px;width:3px;height:1px;background:#4f4f4f"></div>
<div class="a" style="left:6px;top:70.9px;width:5px;height:1px;background:#4f4f4f"></div>
<div class="a" style="left:8px;top:78.0px;width:3px;height:1px;background:#4f4f4f"></div>
<div class="t" style="left:1.3px;top:57.63px;font-size:8px;color:#9c9c9c;transform:scaleX(0.9);transform-origin:0 50%">4</div>
<div class="t" style="left:1.3px;top:65.93px;font-size:8px;color:#9c9c9c;transform:scaleX(0.9);transform-origin:0 50%">0</div>
<div class="t" style="left:1.3px;top:74.23px;font-size:8px;color:#9c9c9c;transform:scaleX(0.9);transform-origin:0 50%">0</div>
<div class="a" style="left:0;top:85.2px;width:11px;height:1px;background:#545454"></div>
<div class="a" style="left:8px;top:92.4px;width:3px;height:1px;background:#4f4f4f"></div>
<div class="a" style="left:6px;top:99.6px;width:5px;height:1px;background:#4f4f4f"></div>
<div class="a" style="left:8px;top:106.8px;width:3px;height:1px;background:#4f4f4f"></div>
<div class="t" style="left:1.3px;top:86.39px;font-size:8px;color:#9c9c9c;transform:scaleX(0.9);transform-origin:0 50%">2</div>
<div class="t" style="left:1.3px;top:94.69px;font-size:8px;color:#9c9c9c;transform:scaleX(0.9);transform-origin:0 50%">0</div>
<div class="t" style="left:1.3px;top:102.99px;font-size:8px;color:#9c9c9c;transform:scaleX(0.9);transform-origin:0 50%">0</div>
<div class="a" style="left:0;top:114.0px;width:11px;height:1px;background:#545454"></div>
<div class="a" style="left:8px;top:121.2px;width:3px;height:1px;background:#4f4f4f"></div>
<div class="a" style="left:6px;top:128.4px;width:5px;height:1px;background:#4f4f4f"></div>
<div class="a" style="left:8px;top:135.6px;width:3px;height:1px;background:#4f4f4f"></div>
<div class="t" style="left:1.3px;top:115.16px;font-size:8px;color:#9c9c9c;transform:scaleX(0.9);transform-origin:0 50%">0</div>
<div class="a" style="left:0;top:142.8px;width:11px;height:1px;background:#545454"></div>
<div class="a" style="left:8px;top:150.0px;width:3px;height:1px;background:#4f4f4f"></div>
<div class="a" style="left:6px;top:157.1px;width:5px;height:1px;background:#4f4f4f"></div>
<div class="a" style="left:8px;top:164.3px;width:3px;height:1px;background:#4f4f4f"></div>
<div class="t" style="left:1.3px;top:143.93px;font-size:8px;color:#9c9c9c;transform:scaleX(0.9);transform-origin:0 50%">2</div>
<div class="t" style="left:1.3px;top:152.23px;font-size:8px;color:#9c9c9c;transform:scaleX(0.9);transform-origin:0 50%">0</div>
<div class="t" style="left:1.3px;top:160.53px;font-size:8px;color:#9c9c9c;transform:scaleX(0.9);transform-origin:0 50%">0</div>
<div class="a" style="left:0;top:171.5px;width:11px;height:1px;background:#545454"></div>
<div class="a" style="left:8px;top:178.7px;width:3px;height:1px;background:#4f4f4f"></div>
<div class="a" style="left:6px;top:185.9px;width:5px;height:1px;background:#4f4f4f"></div>
<div class="a" style="left:8px;top:193.1px;width:3px;height:1px;background:#4f4f4f"></div>
<div class="t" style="left:1.3px;top:172.69px;font-size:8px;color:#9c9c9c;transform:scaleX(0.9);transform-origin:0 50%">4</div>
<div class="t" style="left:1.3px;top:180.99px;font-size:8px;color:#9c9c9c;transform:scaleX(0.9);transform-origin:0 50%">0</div>
<div class="t" style="left:1.3px;top:189.29px;font-size:8px;color:#9c9c9c;transform:scaleX(0.9);transform-origin:0 50%">0</div>
<div class="a" style="left:0;top:200.3px;width:11px;height:1px;background:#545454"></div>
<div class="a" style="left:8px;top:207.5px;width:3px;height:1px;background:#4f4f4f"></div>
<div class="a" style="left:6px;top:214.7px;width:5px;height:1px;background:#4f4f4f"></div>
<div class="a" style="left:8px;top:221.9px;width:3px;height:1px;background:#4f4f4f"></div>
<div class="t" style="left:1.3px;top:201.46px;font-size:8px;color:#9c9c9c;transform:scaleX(0.9);transform-origin:0 50%">6</div>
<div class="t" style="left:1.3px;top:209.76px;font-size:8px;color:#9c9c9c;transform:scaleX(0.9);transform-origin:0 50%">0</div>
<div class="t" style="left:1.3px;top:218.06px;font-size:8px;color:#9c9c9c;transform:scaleX(0.9);transform-origin:0 50%">0</div>
<div class="a" style="left:0;top:229.1px;width:11px;height:1px;background:#545454"></div>
<div class="a" style="left:8px;top:236.3px;width:3px;height:1px;background:#4f4f4f"></div>
<div class="a" style="left:6px;top:243.4px;width:5px;height:1px;background:#4f4f4f"></div>
<div class="a" style="left:8px;top:250.6px;width:3px;height:1px;background:#4f4f4f"></div>
<div class="t" style="left:1.3px;top:230.23px;font-size:8px;color:#9c9c9c;transform:scaleX(0.9);transform-origin:0 50%">8</div>
<div class="t" style="left:1.3px;top:238.53px;font-size:8px;color:#9c9c9c;transform:scaleX(0.9);transform-origin:0 50%">0</div>
<div class="t" style="left:1.3px;top:246.83px;font-size:8px;color:#9c9c9c;transform:scaleX(0.9);transform-origin:0 50%">0</div>
<div class="a" style="left:0;top:257.8px;width:11px;height:1px;background:#545454"></div>
<div class="a" style="left:8px;top:265.0px;width:3px;height:1px;background:#4f4f4f"></div>
<div class="a" style="left:6px;top:272.2px;width:5px;height:1px;background:#4f4f4f"></div>
<div class="a" style="left:8px;top:279.4px;width:3px;height:1px;background:#4f4f4f"></div>
<div class="t" style="left:1.3px;top:258.65px;font-size:6.0px;color:#9c9c9c;transform:scaleX(1.08);transform-origin:0 50%">1</div>
<div class="t" style="left:1.3px;top:265.65px;font-size:6.0px;color:#9c9c9c;transform:scaleX(1.08);transform-origin:0 50%">0</div>
<div class="t" style="left:1.3px;top:272.65px;font-size:6.0px;color:#9c9c9c;transform:scaleX(1.08);transform-origin:0 50%">0</div>
<div class="t" style="left:1.3px;top:279.65px;font-size:6.0px;color:#9c9c9c;transform:scaleX(1.08);transform-origin:0 50%">0</div>
<div class="a" style="left:0;top:286.6px;width:11px;height:1px;background:#545454"></div>
<div class="a" style="left:8px;top:293.8px;width:3px;height:1px;background:#4f4f4f"></div>
<div class="a" style="left:6px;top:301.0px;width:5px;height:1px;background:#4f4f4f"></div>
<div class="a" style="left:8px;top:308.2px;width:3px;height:1px;background:#4f4f4f"></div>
<div class="t" style="left:1.3px;top:287.42px;font-size:6.0px;color:#9c9c9c;transform:scaleX(1.08);transform-origin:0 50%">1</div>
<div class="t" style="left:1.3px;top:294.42px;font-size:6.0px;color:#9c9c9c;transform:scaleX(1.08);transform-origin:0 50%">2</div>
<div class="t" style="left:1.3px;top:301.42px;font-size:6.0px;color:#9c9c9c;transform:scaleX(1.08);transform-origin:0 50%">0</div>
<div class="t" style="left:1.3px;top:308.42px;font-size:6.0px;color:#9c9c9c;transform:scaleX(1.08);transform-origin:0 50%">0</div>
<div class="a" style="left:0;top:315.4px;width:11px;height:1px;background:#545454"></div>
<div class="a" style="left:8px;top:322.6px;width:3px;height:1px;background:#4f4f4f"></div>
<div class="a" style="left:6px;top:329.7px;width:5px;height:1px;background:#4f4f4f"></div>
<div class="a" style="left:8px;top:336.9px;width:3px;height:1px;background:#4f4f4f"></div>
<div class="t" style="left:1.3px;top:316.19px;font-size:6.0px;color:#9c9c9c;transform:scaleX(1.08);transform-origin:0 50%">1</div>
<div class="t" style="left:1.3px;top:323.19px;font-size:6.0px;color:#9c9c9c;transform:scaleX(1.08);transform-origin:0 50%">4</div>
<div class="t" style="left:1.3px;top:330.19px;font-size:6.0px;color:#9c9c9c;transform:scaleX(1.08);transform-origin:0 50%">0</div>
<div class="t" style="left:1.3px;top:337.19px;font-size:6.0px;color:#9c9c9c;transform:scaleX(1.08);transform-origin:0 50%">0</div>
<div class="a" style="left:0;top:344.1px;width:11px;height:1px;background:#545454"></div>
<div class="a" style="left:8px;top:351.3px;width:3px;height:1px;background:#4f4f4f"></div>
<div class="a" style="left:6px;top:358.5px;width:5px;height:1px;background:#4f4f4f"></div>
<div class="a" style="left:8px;top:365.7px;width:3px;height:1px;background:#4f4f4f"></div>
<div class="t" style="left:1.3px;top:344.95px;font-size:6.0px;color:#9c9c9c;transform:scaleX(1.08);transform-origin:0 50%">1</div>
<div class="t" style="left:1.3px;top:351.95px;font-size:6.0px;color:#9c9c9c;transform:scaleX(1.08);transform-origin:0 50%">6</div>
<div class="t" style="left:1.3px;top:358.95px;font-size:6.0px;color:#9c9c9c;transform:scaleX(1.08);transform-origin:0 50%">0</div>
<div class="t" style="left:1.3px;top:365.95px;font-size:6.0px;color:#9c9c9c;transform:scaleX(1.08);transform-origin:0 50%">0</div>
<div class="a" style="left:0;top:372.9px;width:11px;height:1px;background:#545454"></div>
<div class="a" style="left:8px;top:380.1px;width:3px;height:1px;background:#4f4f4f"></div>
<div class="a" style="left:6px;top:387.3px;width:5px;height:1px;background:#4f4f4f"></div>
<div class="a" style="left:8px;top:394.5px;width:3px;height:1px;background:#4f4f4f"></div>
<div class="t" style="left:1.3px;top:373.72px;font-size:6.0px;color:#9c9c9c;transform:scaleX(1.08);transform-origin:0 50%">1</div>
<div class="t" style="left:1.3px;top:380.72px;font-size:6.0px;color:#9c9c9c;transform:scaleX(1.08);transform-origin:0 50%">8</div>
<div class="t" style="left:1.3px;top:387.72px;font-size:6.0px;color:#9c9c9c;transform:scaleX(1.08);transform-origin:0 50%">0</div>
<div class="t" style="left:1.3px;top:394.72px;font-size:6.0px;color:#9c9c9c;transform:scaleX(1.08);transform-origin:0 50%">0</div>
<div class="a" style="left:0;top:401.7px;width:11px;height:1px;background:#545454"></div>
<div class="a" style="left:8px;top:408.9px;width:3px;height:1px;background:#4f4f4f"></div>
<div class="a" style="left:6px;top:416.0px;width:5px;height:1px;background:#4f4f4f"></div>
<div class="a" style="left:8px;top:423.2px;width:3px;height:1px;background:#4f4f4f"></div>
<div class="t" style="left:1.3px;top:402.49px;font-size:6.0px;color:#9c9c9c;transform:scaleX(1.08);transform-origin:0 50%">2</div>
<div class="t" style="left:1.3px;top:409.49px;font-size:6.0px;color:#9c9c9c;transform:scaleX(1.08);transform-origin:0 50%">0</div>
<div class="t" style="left:1.3px;top:416.49px;font-size:6.0px;color:#9c9c9c;transform:scaleX(1.08);transform-origin:0 50%">0</div>
<div class="t" style="left:1.3px;top:423.49px;font-size:6.0px;color:#9c9c9c;transform:scaleX(1.08);transform-origin:0 50%">0</div>
<div class="a" style="left:0;top:430.4px;width:11px;height:1px;background:#545454"></div>
<div class="a" style="left:8px;top:437.6px;width:3px;height:1px;background:#4f4f4f"></div>
<div class="a" style="left:6px;top:444.8px;width:5px;height:1px;background:#4f4f4f"></div>
<div class="a" style="left:8px;top:452.0px;width:3px;height:1px;background:#4f4f4f"></div>
<div class="t" style="left:1.3px;top:431.25px;font-size:6.0px;color:#9c9c9c;transform:scaleX(1.08);transform-origin:0 50%">2</div>
<div class="t" style="left:1.3px;top:438.25px;font-size:6.0px;color:#9c9c9c;transform:scaleX(1.08);transform-origin:0 50%">2</div>
<div class="t" style="left:1.3px;top:445.25px;font-size:6.0px;color:#9c9c9c;transform:scaleX(1.08);transform-origin:0 50%">0</div>
<div class="t" style="left:1.3px;top:452.25px;font-size:6.0px;color:#9c9c9c;transform:scaleX(1.08);transform-origin:0 50%">0</div>
<div class="a" style="left:0;top:459.2px;width:11px;height:1px;background:#545454"></div>
<div class="a" style="left:8px;top:466.4px;width:3px;height:1px;background:#4f4f4f"></div>
<div class="a" style="left:6px;top:473.6px;width:5px;height:1px;background:#4f4f4f"></div>
<div class="a" style="left:8px;top:480.8px;width:3px;height:1px;background:#4f4f4f"></div>
<div class="t" style="left:1.3px;top:460.02px;font-size:6.0px;color:#9c9c9c;transform:scaleX(1.08);transform-origin:0 50%">2</div>
<div class="t" style="left:1.3px;top:467.02px;font-size:6.0px;color:#9c9c9c;transform:scaleX(1.08);transform-origin:0 50%">4</div>
<div class="t" style="left:1.3px;top:474.02px;font-size:6.0px;color:#9c9c9c;transform:scaleX(1.08);transform-origin:0 50%">0</div>
<div class="t" style="left:1.3px;top:481.02px;font-size:6.0px;color:#9c9c9c;transform:scaleX(1.08);transform-origin:0 50%">0</div>
<div class="a" style="left:0;top:488.0px;width:11px;height:1px;background:#545454"></div>
<div class="a" style="left:8px;top:495.2px;width:3px;height:1px;background:#4f4f4f"></div>
<div class="a" style="left:6px;top:502.3px;width:5px;height:1px;background:#4f4f4f"></div>
<div class="a" style="left:8px;top:509.5px;width:3px;height:1px;background:#4f4f4f"></div>
<div class="t" style="left:1.3px;top:488.79px;font-size:6.0px;color:#9c9c9c;transform:scaleX(1.08);transform-origin:0 50%">2</div>
<div class="t" style="left:1.3px;top:495.79px;font-size:6.0px;color:#9c9c9c;transform:scaleX(1.08);transform-origin:0 50%">6</div>
<div class="t" style="left:1.3px;top:502.79px;font-size:6.0px;color:#9c9c9c;transform:scaleX(1.08);transform-origin:0 50%">0</div>
<div class="t" style="left:1.3px;top:509.79px;font-size:6.0px;color:#9c9c9c;transform:scaleX(1.08);transform-origin:0 50%">0</div>
<div class="a" style="left:0;top:516.7px;width:11px;height:1px;background:#545454"></div>
<div class="a" style="left:8px;top:523.9px;width:3px;height:1px;background:#4f4f4f"></div>
<div class="a" style="left:6px;top:531.1px;width:5px;height:1px;background:#4f4f4f"></div>
<div class="a" style="left:8px;top:538.3px;width:3px;height:1px;background:#4f4f4f"></div>
<div class="t" style="left:1.3px;top:517.55px;font-size:6.0px;color:#9c9c9c;transform:scaleX(1.08);transform-origin:0 50%">2</div>
<div class="t" style="left:1.3px;top:524.55px;font-size:6.0px;color:#9c9c9c;transform:scaleX(1.08);transform-origin:0 50%">8</div>
<div class="t" style="left:1.3px;top:531.55px;font-size:6.0px;color:#9c9c9c;transform:scaleX(1.08);transform-origin:0 50%">0</div>
<div class="t" style="left:1.3px;top:538.55px;font-size:6.0px;color:#9c9c9c;transform:scaleX(1.08);transform-origin:0 50%">0</div>
<div class="a" style="left:0;top:545.5px;width:11px;height:1px;background:#545454"></div>
<div class="a" style="left:8px;top:552.7px;width:3px;height:1px;background:#4f4f4f"></div>
<div class="a" style="left:6px;top:559.9px;width:5px;height:1px;background:#4f4f4f"></div>
<div class="a" style="left:8px;top:567.1px;width:3px;height:1px;background:#4f4f4f"></div>
<div class="t" style="left:1.3px;top:546.32px;font-size:6.0px;color:#9c9c9c;transform:scaleX(1.08);transform-origin:0 50%">3</div>
<div class="t" style="left:1.3px;top:553.32px;font-size:6.0px;color:#9c9c9c;transform:scaleX(1.08);transform-origin:0 50%">0</div>
<div class="t" style="left:1.3px;top:560.32px;font-size:6.0px;color:#9c9c9c;transform:scaleX(1.08);transform-origin:0 50%">0</div>
<div class="t" style="left:1.3px;top:567.32px;font-size:6.0px;color:#9c9c9c;transform:scaleX(1.08);transform-origin:0 50%">0</div>
<div class="a" style="left:0;top:574.3px;width:11px;height:1px;background:#545454"></div>
<div class="a" style="left:8px;top:581.5px;width:3px;height:1px;background:#4f4f4f"></div>
<div class="a" style="left:6px;top:588.6px;width:5px;height:1px;background:#4f4f4f"></div>
<div class="a" style="left:8px;top:595.8px;width:3px;height:1px;background:#4f4f4f"></div>
<div class="t" style="left:1.3px;top:575.09px;font-size:6.0px;color:#9c9c9c;transform:scaleX(1.08);transform-origin:0 50%">3</div>
<div class="t" style="left:1.3px;top:582.09px;font-size:6.0px;color:#9c9c9c;transform:scaleX(1.08);transform-origin:0 50%">2</div>
<div class="t" style="left:1.3px;top:589.09px;font-size:6.0px;color:#9c9c9c;transform:scaleX(1.08);transform-origin:0 50%">0</div>
<div class="t" style="left:1.3px;top:596.09px;font-size:6.0px;color:#9c9c9c;transform:scaleX(1.08);transform-origin:0 50%">0</div>
<div class="a" style="left:0;top:603.0px;width:11px;height:1px;background:#545454"></div>
<div class="a" style="left:8px;top:610.2px;width:3px;height:1px;background:#4f4f4f"></div>
<div class="a" style="left:6px;top:617.4px;width:5px;height:1px;background:#4f4f4f"></div>
<div class="a" style="left:8px;top:624.6px;width:3px;height:1px;background:#4f4f4f"></div>
<div class="t" style="left:1.3px;top:603.85px;font-size:6.0px;color:#9c9c9c;transform:scaleX(1.08);transform-origin:0 50%">3</div>
<div class="t" style="left:1.3px;top:610.85px;font-size:6.0px;color:#9c9c9c;transform:scaleX(1.08);transform-origin:0 50%">4</div>
<div class="t" style="left:1.3px;top:617.85px;font-size:6.0px;color:#9c9c9c;transform:scaleX(1.08);transform-origin:0 50%">0</div>
<div class="t" style="left:1.3px;top:624.85px;font-size:6.0px;color:#9c9c9c;transform:scaleX(1.08);transform-origin:0 50%">0</div>
<div class="a" style="left:0;top:631.8px;width:11px;height:1px;background:#545454"></div>
<div class="a" style="left:8px;top:639.0px;width:3px;height:1px;background:#4f4f4f"></div>
<div class="a" style="left:6px;top:646.2px;width:5px;height:1px;background:#4f4f4f"></div>
<div class="a" style="left:8px;top:653.4px;width:3px;height:1px;background:#4f4f4f"></div>
<div class="t" style="left:1.3px;top:632.62px;font-size:6.0px;color:#9c9c9c;transform:scaleX(1.08);transform-origin:0 50%">3</div>
<div class="t" style="left:1.3px;top:639.62px;font-size:6.0px;color:#9c9c9c;transform:scaleX(1.08);transform-origin:0 50%">6</div>
<div class="t" style="left:1.3px;top:646.62px;font-size:6.0px;color:#9c9c9c;transform:scaleX(1.08);transform-origin:0 50%">0</div>
<div class="t" style="left:1.3px;top:653.62px;font-size:6.0px;color:#9c9c9c;transform:scaleX(1.08);transform-origin:0 50%">0</div>
</div>
<div class="t" style="left:31px;top:713.62px;font-size:7.5px;color:#e8e8e8;font-weight:bold;transform:scaleX(0.786);transform-origin:0 50%;">20.66%</div>
<div class="t" style="left:70px;top:713.62px;font-size:7.5px;color:#d8d8d8;font-weight:normal;transform:scaleX(0.839);transform-origin:0 50%;-webkit-text-stroke:0.18px #d8d8d8;">2232 px x 2854 px (250 ppi)</div>
<div class="t" style="left:164.5px;top:713.28px;font-size:8px;color:#bbb;font-weight:normal;-webkit-text-stroke:0.18px #bbb;">&#8250;</div>
<div class="a" style="left:3px;top:62px;width:18.5px;height:15.5px;background:#2f2f2f;border-radius:1.5px"></div>
<svg style="left:6.99px;top:64.19px;" width="10.620000000000001" height="10.620000000000001" viewBox="0 0 12 12"><g transform="translate(1,1)"><path d="M5 0 L6.8 2.2 L5.5 2.2 L5.5 4.5 L7.8 4.5 L7.8 3.2 L10 5 L7.8 6.8 L7.8 5.5 L5.5 5.5 L5.5 7.8 L6.8 7.8 L5 10 L3.2 7.8 L4.5 7.8 L4.5 5.5 L2.2 5.5 L2.2 6.8 L0 5 L2.2 3.2 L2.2 4.5 L4.5 4.5 L4.5 2.2 L3.2 2.2 Z" fill="#e6e6e6"/></g></svg>
<svg style="left:19px;top:73.7px;" width="2.4" height="2.4" viewBox="0 0 2.4 2.4"><path d="M2.4 0 L2.4 2.4 L0 2.4 Z" fill="#c8c8c8"/></svg>
<svg style="left:6.99px;top:82.39px;" width="10.620000000000001" height="10.620000000000001" viewBox="0 0 12 12"><rect x="1" y="2" width="10" height="8" fill="none" stroke="#e4e4e4" stroke-width="1.1" stroke-dasharray="2 1.2"/></svg>
<svg style="left:19px;top:91.9px;" width="2.4" height="2.4" viewBox="0 0 2.4 2.4"><path d="M2.4 0 L2.4 2.4 L0 2.4 Z" fill="#c8c8c8"/></svg>
<svg style="left:6.99px;top:100.39px;" width="10.620000000000001" height="10.620000000000001" viewBox="0 0 12 12"><path d="M1.5 2 L5.5 4.5 L10.5 1.5 L8.5 7.5 L3 8.5 Z" fill="none" stroke="#e4e4e4" stroke-width="1.1"/><path d="M3 8.5 C2 9.5 3.5 11 2 11.5" fill="none" stroke="#e4e4e4" stroke-width="1.1"/></svg>
<svg style="left:19px;top:109.9px;" width="2.4" height="2.4" viewBox="0 0 2.4 2.4"><path d="M2.4 0 L2.4 2.4 L0 2.4 Z" fill="#c8c8c8"/></svg>
<svg style="left:6.99px;top:117.99px;" width="10.620000000000001" height="10.620000000000001" viewBox="0 0 12 12"><path d="M1 5 L1 1 L5 1" fill="none" stroke="#e4e4e4" stroke-width="1.1"/><rect x="2.5" y="2.5" width="4" height="4" fill="#e4e4e4"/><path d="M6 5.5 L6 11.5 L7.6 9.8 L9 12 L10 11.4 L8.7 9.3 L10.8 9.1 Z" fill="#e4e4e4"/></svg>
<svg style="left:19px;top:127.5px;" width="2.4" height="2.4" viewBox="0 0 2.4 2.4"><path d="M2.4 0 L2.4 2.4 L0 2.4 Z" fill="#c8c8c8"/></svg>
<svg style="left:6.99px;top:135.69px;" width="10.620000000000001" height="10.620000000000001" viewBox="0 0 12 12"><path d="M3 0 L3 9 L12 9 M0 3 L9 3 L9 12" fill="none" stroke="#e4e4e4" stroke-width="1.1" stroke-width="1.3"/></svg>
<svg style="left:19px;top:145.2px;" width="2.4" height="2.4" viewBox="0 0 2.4 2.4"><path d="M2.4 0 L2.4 2.4 L0 2.4 Z" fill="#c8c8c8"/></svg>
<svg style="left:6.99px;top:153.69px;" width="10.620000000000001" height="10.620000000000001" viewBox="0 0 12 12"><rect x="1.5" y="1.5" width="9" height="9" fill="none" stroke="#e4e4e4" stroke-width="1.1"/><path d="M1.5 1.5 L10.5 10.5 M10.5 1.5 L1.5 10.5" fill="none" stroke="#e4e4e4" stroke-width="1.1" stroke-width="0.9"/></svg>
<svg style="left:19px;top:163.2px;" width="2.4" height="2.4" viewBox="0 0 2.4 2.4"><path d="M2.4 0 L2.4 2.4 L0 2.4 Z" fill="#c8c8c8"/></svg>
<svg style="left:6.99px;top:171.99px;" width="10.620000000000001" height="10.620000000000001" viewBox="0 0 12 12"><path d="M1 11 L1.5 8.5 L6.5 3.5 L8.5 5.5 L3.5 10.5 Z" fill="none" stroke="#e4e4e4" stroke-width="1.1" stroke-width="0.9"/><path d="M6 2.5 L9.5 6 M7.5 4.5 L9.5 2.5" stroke="#e4e4e4" stroke-width="2.2" stroke-linecap="round" fill="none"/></svg>
<svg style="left:19px;top:181.5px;" width="2.4" height="2.4" viewBox="0 0 2.4 2.4"><path d="M2.4 0 L2.4 2.4 L0 2.4 Z" fill="#c8c8c8"/></svg>
<svg style="left:6.99px;top:189.99px;" width="10.620000000000001" height="10.620000000000001" viewBox="0 0 12 12"><g transform="rotate(-45 6 6)"><rect x="0" y="3.2" width="12" height="5.6" rx="2" fill="#e4e4e4"/><rect x="4.3" y="3.2" width="3.4" height="5.6" fill="#535353"/><circle cx="5.3" cy="5" r="0.5" fill="#e4e4e4"/><circle cx="6.7" cy="5" r="0.5" fill="#e4e4e4"/><circle cx="5.3" cy="7" r="0.5" fill="#e4e4e4"/><circle cx="6.7" cy="7" r="0.5" fill="#e4e4e4"/></g></svg>
<svg style="left:19px;top:199.5px;" width="2.4" height="2.4" viewBox="0 0 2.4 2.4"><path d="M2.4 0 L2.4 2.4 L0 2.4 Z" fill="#c8c8c8"/></svg>
<svg style="left:6.99px;top:208.69px;" width="10.620000000000001" height="10.620000000000001" viewBox="0 0 12 12"><path d="M10.8 1 L5.2 7.4" stroke="#e4e4e4" stroke-width="1.7" stroke-linecap="round"/><path d="M4.8 7.2 C3 7.2 3 9.5 1 11 C4 11.5 6 10 5.8 8.2 Z" fill="#e4e4e4"/></svg>
<svg style="left:19px;top:218.2px;" width="2.4" height="2.4" viewBox="0 0 2.4 2.4"><path d="M2.4 0 L2.4 2.4 L0 2.4 Z" fill="#c8c8c8"/></svg>
<svg style="left:6.99px;top:226.99px;" width="10.620000000000001" height="10.620000000000001" viewBox="0 0 12 12"><path d="M4.5 1.2 C4.5 -0.2 7.5 -0.2 7.5 1.2 C7.5 2.8 6.8 3.6 6.8 5.5 L10.5 5.5 L10.5 8 L1.5 8 L1.5 5.5 L5.2 5.5 C5.2 3.6 4.5 2.8 4.5 1.2 Z" fill="#e4e4e4"/><rect x="1.5" y="9.3" width="9" height="1.6" fill="#e4e4e4"/></svg>
<svg style="left:19px;top:236.5px;" width="2.4" height="2.4" viewBox="0 0 2.4 2.4"><path d="M2.4 0 L2.4 2.4 L0 2.4 Z" fill="#c8c8c8"/></svg>
<svg style="left:6.99px;top:244.69px;" width="10.620000000000001" height="10.620000000000001" viewBox="0 0 12 12"><path d="M10.8 1.5 L6 7" stroke="#e4e4e4" stroke-width="1.6" stroke-linecap="round"/><path d="M5.6 6.8 C4 6.8 4 9 2.2 10.4 C5 11 6.8 9.6 6.6 7.8 Z" fill="#e4e4e4"/><path d="M1 5.5 C1 2.5 3.5 1 6 1.8" fill="none" stroke="#e4e4e4" stroke-width="1.1" stroke-width="0.9"/><path d="M0 4.5 L1.1 6.3 L2.5 4.8 Z" fill="#e4e4e4"/></svg>
<svg style="left:19px;top:254.2px;" width="2.4" height="2.4" viewBox="0 0 2.4 2.4"><path d="M2.4 0 L2.4 2.4 L0 2.4 Z" fill="#c8c8c8"/></svg>
<svg style="left:6.99px;top:262.99px;" width="10.620000000000001" height="10.620000000000001" viewBox="0 0 12 12"><path d="M7.5 1.5 L11 5 L6 10 L2.5 6.5 Z" fill="#e4e4e4"/><path d="M2.5 6.5 L6 10 L4.2 11 L2 11 L0.8 9.2 Z" fill="none" stroke="#e4e4e4" stroke-width="1.1" stroke-width="0.9"/></svg>
<svg style="left:19px;top:272.5px;" width="2.4" height="2.4" viewBox="0 0 2.4 2.4"><path d="M2.4 0 L2.4 2.4 L0 2.4 Z" fill="#c8c8c8"/></svg>
<svg style="left:7px;top:282px;" width="11.4" height="9.6" viewBox="0 0 11.4 9.6"><defs><linearGradient id="gg" x1="0" x2="1"><stop offset="0" stop-color="#f0f0f0"/><stop offset="1" stop-color="#555"/></linearGradient></defs><rect x="0.5" y="0.5" width="10.4" height="8.6" fill="url(#gg)" stroke="#e4e4e4" stroke-width="1.1"/></svg>
<svg style="left:19px;top:290.5px;" width="2.4" height="2.4" viewBox="0 0 2.4 2.4"><path d="M2.4 0 L2.4 2.4 L0 2.4 Z" fill="#c8c8c8"/></svg>
<svg style="left:6.99px;top:299.19px;" width="10.620000000000001" height="10.620000000000001" viewBox="0 0 12 12"><path d="M6 0.5 C4.5 4 2.3 5.5 2.3 8 C2.3 10.2 4 11.5 6 11.5 C8 11.5 9.7 10.2 9.7 8 C9.7 5.5 7.5 4 6 0.5 Z" fill="#e4e4e4"/></svg>
<svg style="left:19px;top:308.7px;" width="2.4" height="2.4" viewBox="0 0 2.4 2.4"><path d="M2.4 0 L2.4 2.4 L0 2.4 Z" fill="#c8c8c8"/></svg>
<svg style="left:6.99px;top:317.19px;" width="10.620000000000001" height="10.620000000000001" viewBox="0 0 12 12"><circle cx="7.5" cy="4.3" r="3.6" fill="#e4e4e4"/><path d="M5 7 L1.2 11" stroke="#e4e4e4" stroke-width="1.8" stroke-linecap="round"/></svg>
<svg style="left:19px;top:326.7px;" width="2.4" height="2.4" viewBox="0 0 2.4 2.4"><path d="M2.4 0 L2.4 2.4 L0 2.4 Z" fill="#c8c8c8"/></svg>
<svg style="left:6.99px;top:335.89px;" width="10.620000000000001" height="10.620000000000001" viewBox="0 0 12 12"><path d="M1 11 L2.2 5.2 L7.6 2.2 L10 4.6 L7 10 Z" fill="none" stroke="#e4e4e4" stroke-width="1.1" stroke-width="1.2"/><circle cx="5.6" cy="6.6" r="1.1" fill="#e4e4e4"/><path d="M7.6 0.8 L11.3 4.5" stroke="#e4e4e4" stroke-width="1.5"/></svg>
<svg style="left:19px;top:345.4px;" width="2.4" height="2.4" viewBox="0 0 2.4 2.4"><path d="M2.4 0 L2.4 2.4 L0 2.4 Z" fill="#c8c8c8"/></svg>
<div class="t" style="left:8.8px;top:353.6px;font-family:'Liberation Serif',serif;font-size:12.5px;font-weight:bold;color:#e4e4e4">T</div>
<svg style="left:19px;top:363.4px;" width="2.4" height="2.4" viewBox="0 0 2.4 2.4"><path d="M2.4 0 L2.4 2.4 L0 2.4 Z" fill="#c8c8c8"/></svg>
<svg style="left:6.99px;top:371.59px;" width="10.620000000000001" height="10.620000000000001" viewBox="0 0 12 12"><path d="M3.5 0.5 L3.5 11 L6 8.3 L7.7 12 L9.2 11.3 L7.5 7.7 L10.8 7.5 Z" fill="#e4e4e4"/></svg>
<svg style="left:19px;top:381.09999999999997px;" width="2.4" height="2.4" viewBox="0 0 2.4 2.4"><path d="M2.4 0 L2.4 2.4 L0 2.4 Z" fill="#c8c8c8"/></svg>
<svg style="left:6.99px;top:389.59px;" width="10.620000000000001" height="10.620000000000001" viewBox="0 0 12 12"><rect x="1" y="2" width="10.5" height="8.5" fill="#6a6a6a" stroke="#e4e4e4" stroke-width="1.2"/></svg>
<svg style="left:19px;top:399.09999999999997px;" width="2.4" height="2.4" viewBox="0 0 2.4 2.4"><path d="M2.4 0 L2.4 2.4 L0 2.4 Z" fill="#c8c8c8"/></svg>
<svg style="left:6.99px;top:407.59px;" width="10.620000000000001" height="10.620000000000001" viewBox="0 0 12 12"><path d="M3 6.5 L3 3 C3 2 4.3 2 4.3 3 L4.3 1.6 C4.3 0.6 5.7 0.6 5.7 1.6 L5.7 1.2 C5.7 0.2 7.1 0.2 7.1 1.2 L7.1 2 C7.1 1 8.5 1 8.5 2 L8.5 7.5 C8.5 10.5 7.5 11.5 5.5 11.5 C3.5 11.5 2.5 10.5 1 7.5 C0.5 6.3 2 5.6 3 6.5 Z" fill="#e4e4e4"/><path d="M9.3 3.5 C11.5 4.5 11.5 8 10 9.5" fill="none" stroke="#e4e4e4" stroke-width="1.1" stroke-width="0.8"/></svg>
<svg style="left:19px;top:417.09999999999997px;" width="2.4" height="2.4" viewBox="0 0 2.4 2.4"><path d="M2.4 0 L2.4 2.4 L0 2.4 Z" fill="#c8c8c8"/></svg>
<svg style="left:6.99px;top:425.89px;" width="10.620000000000001" height="10.620000000000001" viewBox="0 0 12 12"><circle cx="5" cy="5" r="3.7" fill="none" stroke="#e4e4e4" stroke-width="1.1" stroke-width="1.3"/><path d="M7.8 7.8 L11.2 11.2" stroke="#e4e4e4" stroke-width="1.8" stroke-linecap="round"/></svg>
<div class="a" style="left:7.7px;top:448.4px;width:2.2px;height:2.2px;border-radius:50%;background:#e4e4e4"></div>
<div class="a" style="left:11.4px;top:448.4px;width:2.2px;height:2.2px;border-radius:50%;background:#e4e4e4"></div>
<div class="a" style="left:15.100000000000001px;top:448.4px;width:2.2px;height:2.2px;border-radius:50%;background:#e4e4e4"></div>
<svg style="left:3.5px;top:462px;" width="7" height="7" viewBox="0 0 7 7"><rect x="2.6" y="2.6" width="4" height="4" fill="#e4e4e4" stroke="#e4e4e4" stroke-width="0.6"/><rect x="0.3" y="0.3" width="4" height="4" fill="#111" stroke="#e4e4e4" stroke-width="0.7"/></svg>
<svg style="left:13.5px;top:461.5px;" width="7" height="7" viewBox="0 0 7 7"><path d="M1.5 2 L5 2 L5 5.5" fill="none" stroke="#e4e4e4" stroke-width="1.1" stroke-width="0.9"/><path d="M0 2 L2 0.3 L2 3.7 Z" fill="#e4e4e4"/><path d="M5 7 L3.4 5 L6.6 5 Z" fill="#e4e4e4"/></svg>
<div class="a" style="left:9.4px;top:481px;width:11.4px;height:12px;background:#ffffff;border:0.6px solid #3a3a3a"></div>
<div class="a" style="left:3px;top:474.2px;width:11.2px;height:11.8px;background:#ffffff;border:0.6px solid #3a3a3a"></div>
<svg style="left:6.5px;top:500px;" width="11" height="11" viewBox="0 0 11 11"><rect x="0.6" y="0.6" width="9.8" height="9.8" fill="none" stroke="#e4e4e4" stroke-width="1.1" stroke-width="1"/><circle cx="5.5" cy="5.5" r="2.6" fill="none" stroke="#e4e4e4" stroke-width="1.1" stroke-width="0.9" stroke-dasharray="1 0.6"/></svg>
<svg style="left:7px;top:519.6px;" width="11" height="9" viewBox="0 0 11 9"><rect x="3.4" y="0.5" width="7" height="5.2" fill="none" stroke="#e4e4e4" stroke-width="1.1" stroke-width="0.9"/><rect x="0.5" y="3.2" width="7" height="5.2" fill="#535353" stroke="#e4e4e4" stroke-width="0.9"/></svg>
<svg style="left:19px;top:528.5px;" width="2.4" height="2.4" viewBox="0 0 2.4 2.4"><path d="M2.4 0 L2.4 2.4 L0 2.4 Z" fill="#c8c8c8"/></svg>
<svg style="left:885.8px;top:42.6px;" width="5.2" height="4.2" viewBox="0 0 5.2 4.2"><path d="M2.2 0.2 L0.4 2.1 L2.2 4 M4.8 0.2 L3 2.1 L4.8 4" fill="none" stroke="#dcdcdc" stroke-width="1.1"/></svg>
<svg style="left:1066.6px;top:42.6px;" width="5.2" height="4.2" viewBox="0 0 5.2 4.2"><path d="M0.4 0.2 L2.2 2.1 L0.4 4 M3 0.2 L4.8 2.1 L3 4" fill="none" stroke="#dcdcdc" stroke-width="1.1"/></svg>
<div class="a" style="left:871.5px;top:97.5px;width:23.5px;height:2.5px;background:#424242;"></div>
<div class="a" style="left:877px;top:102.5px;width:11px;height:1px;background:#474747;"></div>
<div class="a" style="left:871.5px;top:144.5px;width:23.5px;height:2.5px;background:#424242;"></div>
<div class="a" style="left:877px;top:149.5px;width:11px;height:1px;background:#474747;"></div>
<div class="a" style="left:871.5px;top:173.5px;width:23.5px;height:2.5px;background:#424242;"></div>
<div class="a" style="left:877px;top:178.5px;width:11px;height:1px;background:#474747;"></div>
<div class="a" style="left:871.5px;top:202.5px;width:23.5px;height:2.5px;background:#424242;"></div>
<div class="a" style="left:877px;top:207.5px;width:11px;height:1px;background:#474747;"></div>
<div class="a" style="left:877px;top:53px;width:11px;height:1px;background:#474747;"></div>
<svg style="left:876px;top:59px;" width="13" height="13" viewBox="0 0 13 13"><path d="M0.3 1 L4 1 M0.3 2.9 L3.2 2.9 M0.3 4.8 L2.4 4.8" stroke="#e4e4e4" stroke-width="1"/><path d="M11.6 2 L7.2 7.2" stroke="#e4e4e4" stroke-width="2.4" stroke-linecap="round"/><path d="M7.4 6 C5.4 6.4 5.4 8.6 3.4 10.2 C6.4 11 8.6 9.6 8.6 7.6 Z" fill="#e4e4e4"/></svg>
<svg style="left:876px;top:79.5px;" width="13" height="11" viewBox="0 0 13 11"><path d="M3 2.6 L12 2.6 M0.8 7.6 L8 7.6" stroke="#e4e4e4" stroke-width="1.1"/><ellipse cx="3" cy="2.6" rx="2.6" ry="1.9" fill="#e4e4e4"/><path d="M12.2 4.2 L12.2 10.6 L7 7.6 Z" fill="#e4e4e4"/></svg>
<div class="t" style="left:875.5px;top:106.6px;font-size:13px;color:#e4e4e4">A</div>
<div class="a" style="left:886.5px;top:107.5px;width:1px;height:11.5px;background:#e4e4e4;"></div>
<div class="t" style="left:878.5px;top:126.2px;font-size:13px;font-weight:bold;color:#e4e4e4">&#182;</div>
<div class="t" style="left:876.5px;top:154.0px;font-family:'Liberation Serif',serif;font-style:italic;font-size:15px;color:#e4e4e4">A</div>
<div class="a" style="left:876.5px;top:155.2px;width:8px;height:1px;background:#e4e4e4;"></div>
<svg style="left:876.5px;top:184px;" width="12" height="13" viewBox="0 0 12 13"><path d="M6 0.7 L11.2 3.5 L11.2 9.5 L6 12.3 L0.8 9.5 L0.8 3.5 Z" fill="none" stroke="#e4e4e4" stroke-width="1.1"/><path d="M0.8 3.5 L6 6.3 L11.2 3.5 M6 6.3 L6 12.3" fill="none" stroke="#e4e4e4" stroke-width="1.1" stroke-width="0.9"/><circle cx="6" cy="6.3" r="1.3" fill="#e4e4e4"/></svg>
<div class="a" style="left:1010px;top:50px;width:40px;height:18px;background:#535353;"></div>
<div class="t" style="left:901.2px;top:54.78px;font-size:7.6px;color:#b4b4b4;font-weight:bold;transform:scaleX(0.774);transform-origin:0 50%;">Swatc</div>
<div class="t" style="left:924px;top:54.78px;font-size:7.6px;color:#b4b4b4;font-weight:bold;transform:scaleX(0.856);transform-origin:0 50%;">Gradi</div>
<div class="t" style="left:946.8px;top:54.78px;font-size:7.6px;color:#b4b4b4;font-weight:bold;transform:scaleX(0.794);transform-origin:0 50%;">Patter</div>
<div class="t" style="left:969.3px;top:54.78px;font-size:7.6px;color:#b4b4b4;font-weight:bold;transform:scaleX(0.770);transform-origin:0 50%;">Histor</div>
<div class="t" style="left:991.7px;top:54.78px;font-size:7.6px;color:#b4b4b4;font-weight:bold;transform:scaleX(0.770);transform-origin:0 50%;">Actior</div>
<div class="t" style="left:1014.5px;top:54.68px;font-size:7.8px;color:#f2f2f2;font-weight:bold;transform:scaleX(0.791);transform-origin:0 50%;">Properties</div>
<div class="a" style="left:1065.7px;top:56.0px;width:6px;height:1px;background:#c8c8c8;"></div>
<div class="a" style="left:1065.7px;top:58.1px;width:6px;height:1px;background:#c8c8c8;"></div>
<div class="a" style="left:1065.7px;top:60.2px;width:6px;height:1px;background:#c8c8c8;"></div>
<div class="a" style="left:903.3px;top:73.3px;width:12.8px;height:14.6px;background:#3a3a3a;border-radius:1px"></div>
<svg style="left:905.7px;top:75.6px;" width="8" height="10" viewBox="0 0 8 10"><path d="M0.6 0.6 L5 0.6 L7.4 3 L7.4 9.4 L0.6 9.4 Z" fill="none" stroke="#e0e0e0" stroke-width="1"/><path d="M4.6 0.8 L4.6 3.4 L7.2 3.4" fill="none" stroke="#e0e0e0" stroke-width="0.9"/></svg>
<div class="t" style="left:920.4px;top:78.12px;font-size:7.5px;color:#dadada;font-weight:normal;transform:scaleX(0.837);transform-origin:0 50%;-webkit-text-stroke:0.18px #dadada;">Document</div>
<div class="a" style="left:896px;top:92px;width:169px;height:1px;background:#484848;"></div>
<div class="a" style="left:1065px;top:93px;width:10px;height:275px;background:#4a4a4a;"></div>
<div class="a" style="left:1066.7px;top:105.5px;width:6.4px;height:221px;background:#696969;"></div>
<svg style="left:1067.3px;top:98.5px;" width="5.6" height="3.2" viewBox="0 0 5.6 3.2"><path d="M0 3 L2.8 0.4 L5.6 3" fill="none" stroke="#8c8c8c" stroke-width="0.9"/></svg>
<svg style="left:1067.3px;top:359.5px;" width="5.6" height="3.2" viewBox="0 0 5.6 3.2"><path d="M0 0.2 L2.8 2.8 L5.6 0.2" fill="none" stroke="#8c8c8c" stroke-width="0.9"/></svg>
<svg style="left:900.7px;top:100.30000000000001px;" width="5.4" height="3.4" viewBox="0 0 5.4 3.4"><path d="M0.2 0.3 L2.7 2.9 L5.2 0.3" fill="none" stroke="#b0b0b0" stroke-width="0.95"/></svg>
<div class="t" style="left:910.6px;top:98.88px;font-size:7.8px;color:#f0f0f0;font-weight:bold;transform:scaleX(0.789);transform-origin:0 50%;">Canvas</div>
<div class="t" style="left:929px;top:115.73px;font-size:7.5px;color:#cfcfcf;font-weight:normal;transform:scaleX(0.735);transform-origin:0 50%;-webkit-text-stroke:0.18px #cfcfcf;">W</div>
<div class="a" style="left:938px;top:114.3px;width:32.3px;height:10.4px;background:#454545;border-radius:1px"></div>
<div class="t" style="left:940.8px;top:116.03px;font-size:7.5px;color:#ececec;font-weight:normal;transform:scaleX(0.794);transform-origin:0 50%;-webkit-text-stroke:0.18px #ececec;">2232 px</div>
<div class="t" style="left:980.3px;top:115.73px;font-size:7.5px;color:#cfcfcf;font-weight:normal;transform:scaleX(0.860);transform-origin:0 50%;-webkit-text-stroke:0.18px #cfcfcf;">X</div>
<div class="a" style="left:988.3px;top:114.3px;width:32.1px;height:10.4px;background:#4c4c4c;border-radius:1px"></div>
<div class="t" style="left:991.0999999999999px;top:116.03px;font-size:7.5px;color:#6a6a6a;font-weight:normal;transform:scaleX(0.769);transform-origin:0 50%;-webkit-text-stroke:0.18px #6a6a6a;">0 px</div>
<div class="t" style="left:929.5px;top:133.32px;font-size:7.5px;color:#cfcfcf;font-weight:normal;transform:scaleX(0.794);transform-origin:0 50%;-webkit-text-stroke:0.18px #cfcfcf;">H</div>
<div class="a" style="left:938px;top:131.8px;width:32.3px;height:10.4px;background:#454545;border-radius:1px"></div>
<div class="t" style="left:940.8px;top:133.52px;font-size:7.5px;color:#ececec;font-weight:normal;transform:scaleX(0.794);transform-origin:0 50%;-webkit-text-stroke:0.18px #ececec;">2854 px</div>
<div class="t" style="left:980.3px;top:133.32px;font-size:7.5px;color:#cfcfcf;font-weight:normal;transform:scaleX(0.860);transform-origin:0 50%;-webkit-text-stroke:0.18px #cfcfcf;">Y</div>
<div class="a" style="left:988.3px;top:131.8px;width:32.1px;height:10.4px;background:#4c4c4c;border-radius:1px"></div>
<div class="t" style="left:991.0999999999999px;top:133.52px;font-size:7.5px;color:#6a6a6a;font-weight:normal;transform:scaleX(0.769);transform-origin:0 50%;-webkit-text-stroke:0.18px #6a6a6a;">0 px</div>
<svg style="left:908px;top:123px;" width="5" height="11" viewBox="0 0 5 11"><rect x="0.9" y="0.6" width="3.2" height="4.2" rx="1.5" fill="none" stroke="#dedede" stroke-width="1.2"/><rect x="0.9" y="6.2" width="3.2" height="4.2" rx="1.5" fill="none" stroke="#dedede" stroke-width="1.2"/><path d="M2.5 3.6 L2.5 7.4" stroke="#dedede" stroke-width="1.1"/></svg>
<div class="a" style="left:938.7px;top:152.2px;width:14px;height:14.6px;background:#363636;border-radius:1px"></div>
<svg style="left:942px;top:154.8px;" width="7.4" height="9.6" viewBox="0 0 7.4 9.6"><rect x="0.5" y="0.5" width="6.4" height="8.6" fill="none" stroke="#e6e6e6" stroke-width="0.9"/><circle cx="3.7" cy="3.4" r="1.3" fill="#e6e6e6"/><path d="M1.5 8.8 C1.5 5.2 5.9 5.2 5.9 8.8 Z" fill="#e6e6e6"/></svg>
<svg style="left:956.2px;top:154.8px;" width="11.6" height="9.2" viewBox="0 0 11.6 9.2"><rect x="0.5" y="0.5" width="10.6" height="8.2" fill="none" stroke="#d8d8d8" stroke-width="0.9"/><circle cx="5.8" cy="3.4" r="1.3" fill="#d8d8d8"/><path d="M3.2 8 C3.2 5.2 8.4 5.2 8.4 8 Z" fill="#d8d8d8"/></svg>
<div class="t" style="left:938.7px;top:176.32px;font-size:7.5px;color:#dcdcdc;font-weight:normal;transform:scaleX(0.824);transform-origin:0 50%;-webkit-text-stroke:0.18px #dcdcdc;">Resolution: 250 pixels/inch</div>
<div class="t" style="left:918.9px;top:193.92px;font-size:7.5px;color:#cfcfcf;font-weight:normal;transform:scaleX(0.784);transform-origin:0 50%;-webkit-text-stroke:0.18px #cfcfcf;">Mode</div>
<div class="a" style="left:938.7px;top:192.5px;width:81.7px;height:12.3px;background:#454545;border-radius:1px"></div>
<div class="t" style="left:943.7px;top:195.17px;font-size:7.5px;color:#ececec;font-weight:normal;transform:scaleX(0.747);transform-origin:0 50%;-webkit-text-stroke:0.18px #ececec;">RGB Color</div>
<svg style="left:1013.2px;top:197.25px;" width="5.4" height="3.4" viewBox="0 0 5.4 3.4"><path d="M0.2 0.3 L2.7 2.9 L5.2 0.3" fill="none" stroke="#b0b0b0" stroke-width="0.95"/></svg>
<div class="a" style="left:938.7px;top:210.6px;width:81.7px;height:12.3px;background:#454545;border-radius:1px"></div>
<div class="t" style="left:943.7px;top:213.27px;font-size:7.5px;color:#ececec;font-weight:normal;transform:scaleX(0.825);transform-origin:0 50%;-webkit-text-stroke:0.18px #ececec;">16 Bits/Channel</div>
<svg style="left:1013.2px;top:215.35px;" width="5.4" height="3.4" viewBox="0 0 5.4 3.4"><path d="M0.2 0.3 L2.7 2.9 L5.2 0.3" fill="none" stroke="#b0b0b0" stroke-width="0.95"/></svg>
<div class="t" style="left:926.2px;top:230.32px;font-size:7.5px;color:#cfcfcf;font-weight:normal;transform:scaleX(0.731);transform-origin:0 50%;-webkit-text-stroke:0.18px #cfcfcf;">Fill</div>
<div class="a" style="left:938.7px;top:229px;width:11.7px;height:11.7px;background:#565656;border:1px solid #404040"></div>
<div class="a" style="left:953.3px;top:229px;width:67.1px;height:12.3px;background:#454545;border-radius:1px"></div>
<div class="t" style="left:957.7px;top:231.67px;font-size:7.5px;color:#ececec;font-weight:normal;transform:scaleX(0.849);transform-origin:0 50%;-webkit-text-stroke:0.18px #ececec;">Transparent</div>
<svg style="left:1013.1999999999999px;top:233.75px;" width="5.4" height="3.4" viewBox="0 0 5.4 3.4"><path d="M0.2 0.3 L2.7 2.9 L5.2 0.3" fill="none" stroke="#b0b0b0" stroke-width="0.95"/></svg>
<div class="a" style="left:896px;top:246.2px;width:169px;height:1px;background:#484848;"></div>
<svg style="left:900.7px;top:255.1px;" width="5.4" height="3.4" viewBox="0 0 5.4 3.4"><path d="M0.2 0.3 L2.7 2.9 L5.2 0.3" fill="none" stroke="#b0b0b0" stroke-width="0.95"/></svg>
<div class="t" style="left:910.6px;top:253.68px;font-size:7.8px;color:#f0f0f0;font-weight:bold;transform:scaleX(0.809);transform-origin:0 50%;">Rulers &amp; Grids</div>
<div class="a" style="left:902.9px;top:270px;width:14.8px;height:16px;background:#363636;border-radius:1px"></div>
<svg style="left:905.3px;top:272.5px;" width="10" height="11" viewBox="0 0 10 11"><path d="M0 0 L10 0 L10 3.4 L3.4 3.4 L3.4 11 L0 11 Z" fill="#e8e8e8"/><path d="M5 0.6 L5 2 M7 0.6 L7 2 M0.6 5.5 L2 5.5 M0.6 7.5 L2 7.5" stroke="#555" stroke-width="0.7"/></svg>
<svg style="left:924.7px;top:272px;" width="12" height="12.4" viewBox="0 0 12 12.4"><rect x="0.5" y="0.5" width="11" height="11.4" fill="none" stroke="#d6d6d6" stroke-width="0.9"/><path d="M4.2 0.5 L4.2 11.9 M7.8 0.5 L7.8 11.9 M0.5 4.3 L11.5 4.3 M0.5 8.1 L11.5 8.1" stroke="#d6d6d6" stroke-width="0.8"/></svg>
<svg style="left:946.6px;top:272px;" width="11.2" height="12.4" viewBox="0 0 11.2 12.4"><rect x="0.5" y="0.5" width="10.2" height="11.4" fill="#777" stroke="#d0d0d0" stroke-width="0.9"/><path d="M3 0.5 L3 11.9 M5.6 0.5 L5.6 11.9 M8.2 0.5 L8.2 11.9 M0.5 3.4 L10.7 3.4 M0.5 6.2 L10.7 6.2 M0.5 9 L10.7 9" stroke="#999" stroke-width="0.5"/></svg>
<div class="a" style="left:975.2px;top:272px;width:45.2px;height:13.2px;background:#454545;border-radius:1px"></div>
<div class="t" style="left:979.5px;top:275.12px;font-size:7.5px;color:#ececec;font-weight:normal;transform:scaleX(0.760);transform-origin:0 50%;-webkit-text-stroke:0.18px #ececec;">Pixels</div>
<svg style="left:1013.2px;top:277.2px;" width="5.4" height="3.4" viewBox="0 0 5.4 3.4"><path d="M0.2 0.3 L2.7 2.9 L5.2 0.3" fill="none" stroke="#b0b0b0" stroke-width="0.95"/></svg>
<div class="a" style="left:896px;top:294px;width:169px;height:1px;background:#484848;"></div>
<svg style="left:900.7px;top:302.79999999999995px;" width="5.4" height="3.4" viewBox="0 0 5.4 3.4"><path d="M0.2 0.3 L2.7 2.9 L5.2 0.3" fill="none" stroke="#b0b0b0" stroke-width="0.95"/></svg>
<div class="t" style="left:910.6px;top:301.38px;font-size:7.8px;color:#f0f0f0;font-weight:bold;transform:scaleX(0.764);transform-origin:0 50%;">Guides</div>
<div class="a" style="left:902.9px;top:317.3px;width:14.8px;height:16px;background:#363636;border-radius:1px"></div>
<svg style="left:905px;top:319.6px;" width="11" height="11.5" viewBox="0 0 11 11.5"><path d="M3.3 0 L3.3 11.5 M6.2 0 L6.2 11.5 M0 3.6 L11 3.6 M0 7.8 L11 7.8" stroke="#e4e4e4" stroke-width="1"/></svg>
<svg style="left:925.6px;top:319.6px;" width="12" height="11.5" viewBox="0 0 12 11.5"><path d="M3 0 L3 11.5 M5.8 0 L5.8 7 M0 3.6 L10 3.6 M0 7.8 L6 7.8" stroke="#d6d6d6" stroke-width="0.9"/><rect x="7" y="7.8" width="4.6" height="3.6" fill="#e0e0e0"/><path d="M8 7.8 L8 6.6 C8 5.4 10.6 5.4 10.6 6.6 L10.6 7.8" fill="none" stroke="#e0e0e0" stroke-width="0.8"/></svg>
<div class="a" style="left:944px;top:317.3px;width:14.6px;height:16px;background:#363636;border-radius:1px"></div>
<svg style="left:946px;top:319.6px;" width="11" height="11.5" viewBox="0 0 11 11.5"><path d="M3 0 L3 11.5 M0 3.4 L10 3.4" stroke="#e4e4e4" stroke-width="0.9"/><path d="M6.5 2 L6.5 9 M6.5 5 L10 5" stroke="#e4e4e4" stroke-width="1.1"/><path d="M7.5 7.4 L10.8 7.4 L9.2 10.8 Z" fill="#e4e4e4"/></svg>
<div class="a" style="left:975.2px;top:320.2px;width:45.2px;height:12.6px;background:#454545;border-radius:1px"></div>
<svg style="left:1013.2px;top:325.09999999999997px;" width="5.4" height="3.4" viewBox="0 0 5.4 3.4"><path d="M0.2 0.3 L2.7 2.9 L5.2 0.3" fill="none" stroke="#b0b0b0" stroke-width="0.95"/></svg>
<div class="a" style="left:978.7px;top:326px;width:27.2px;height:1.8px;background:#e2e2e2;"></div>
<div class="a" style="left:896px;top:341.5px;width:169px;height:1px;background:#484848;"></div>
<svg style="left:900.7px;top:350.29999999999995px;" width="5.4" height="3.4" viewBox="0 0 5.4 3.4"><path d="M0.2 0.3 L2.7 2.9 L5.2 0.3" fill="none" stroke="#b0b0b0" stroke-width="0.95"/></svg>
<div class="t" style="left:910.6px;top:348.88px;font-size:7.8px;color:#f0f0f0;font-weight:bold;transform:scaleX(0.819);transform-origin:0 50%;">Quick Actions</div>
<div class="a" style="left:896px;top:385px;width:179px;height:2.5px;background:#424242;"></div>
<div class="a" style="left:896px;top:387px;width:184px;height:19.4px;background:#424242;"></div>
<div class="a" style="left:896px;top:387px;width:30px;height:19.6px;background:#535353;"></div>
<div class="t" style="left:901.4px;top:392.88px;font-size:7.8px;color:#f2f2f2;font-weight:bold;transform:scaleX(0.751);transform-origin:0 50%;">Layers</div>
<div class="a" style="left:1065.7px;top:394.4px;width:6px;height:1px;background:#c8c8c8;"></div>
<div class="a" style="left:1065.7px;top:396.5px;width:6px;height:1px;background:#c8c8c8;"></div>
<div class="a" style="left:1065.7px;top:398.59999999999997px;width:6px;height:1px;background:#c8c8c8;"></div>
<div class="a" style="left:899.4px;top:414.3px;width:52.4px;height:11.8px;background:#444;border-radius:1px"></div>
<svg style="left:903.7px;top:416.8px;" width="6.4" height="6.6" viewBox="0 0 6.4 6.6"><circle cx="2.6" cy="2.6" r="1.9" fill="none" stroke="#e6e6e6" stroke-width="1.1"/><path d="M4 4 L6 6.2" stroke="#e6e6e6" stroke-width="1.2"/></svg>
<div class="t" style="left:912.5px;top:416.62px;font-size:7.5px;color:#e4e4e4;font-weight:bold;transform:scaleX(0.732);transform-origin:0 50%;">Kind</div>
<svg style="left:945px;top:418.79999999999995px;" width="5.4" height="3.4" viewBox="0 0 5.4 3.4"><path d="M0.2 0.3 L2.7 2.9 L5.2 0.3" fill="none" stroke="#b0b0b0" stroke-width="0.95"/></svg>
<svg style="left:959.1px;top:416.2px;" width="8.4" height="8" viewBox="0 0 8.4 8"><rect x="0.5" y="0.5" width="7.4" height="7" rx="0.8" fill="none" stroke="#dedede" stroke-width="0.9"/><path d="M1.4 6.4 L3.2 3.8 L4.4 5.2 L5.4 4.4 L7 6.4 Z" fill="#dedede"/></svg>
<svg style="left:974.6px;top:416.2px;" width="8" height="8" viewBox="0 0 8 8"><circle cx="4" cy="4" r="3.4" fill="none" stroke="#dedede" stroke-width="0.9"/><path d="M4 0.6 A3.4 3.4 0 0 1 4 7.4 Z" fill="#dedede" transform="rotate(40 4 4)"/></svg>
<div class="t" style="left:990px;top:415.7px;font-family:'Liberation Serif',serif;font-weight:bold;font-size:10px;color:#dedede">T</div>
<svg style="left:1004.9px;top:416.2px;" width="8.2" height="8.2" viewBox="0 0 8.2 8.2"><rect x="1.3" y="1.3" width="5.6" height="5.6" fill="none" stroke="#dedede" stroke-width="0.9"/><rect x="0" y="0" width="2.2" height="2.2" fill="#dedede"/><rect x="6" y="0" width="2.2" height="2.2" fill="#dedede"/><rect x="0" y="6" width="2.2" height="2.2" fill="#dedede"/><rect x="6" y="6" width="2.2" height="2.2" fill="#dedede"/></svg>
<svg style="left:1020.8px;top:416px;" width="7.6" height="8.6" viewBox="0 0 7.6 8.6"><path d="M0.5 0.5 L4.6 0.5 L7.1 3 L7.1 8.1 L0.5 8.1 Z" fill="none" stroke="#dedede" stroke-width="0.9"/><rect x="2.6" y="4" width="4" height="3.6" fill="#dedede"/></svg>
<div class="a" style="left:1035px;top:413px;width:5.8px;height:5.8px;border-radius:50%;background:#f2f2f2"></div>
<div class="a" style="left:1037.4px;top:418.5px;width:1px;height:3.5px;background:#8a8a8a;"></div>
<div class="a" style="left:896px;top:429.5px;width:179px;height:1px;background:#484848;"></div>
<div class="a" style="left:899.4px;top:433.9px;width:77.2px;height:11.7px;background:#4d4d4d;border:1px solid #474747;border-radius:1px"></div>
<div class="t" style="left:903.7px;top:436.22px;font-size:7.5px;color:#787878;font-weight:normal;transform:scaleX(0.786);transform-origin:0 50%;-webkit-text-stroke:0.18px #787878;">Normal</div>
<svg style="left:969.5px;top:438.29999999999995px;" width="5.4" height="3.4" viewBox="0 0 5.4 3.4"><path d="M0.2 0.3 L2.7 2.9 L5.2 0.3" fill="none" stroke="#5e5e5e" stroke-width="0.95"/></svg>
<div class="t" style="left:982.4px;top:436.22px;font-size:7.5px;color:#787878;font-weight:normal;transform:scaleX(0.796);transform-origin:0 50%;-webkit-text-stroke:0.18px #787878;">Opacity:</div>
<div class="a" style="left:1008.7px;top:434.4px;width:20.3px;height:10.8px;background:#474747;"></div>
<div class="t" style="left:1011px;top:436.47px;font-size:7px;color:#5c5c5c;font-weight:normal;transform:scaleX(0.838);transform-origin:0 50%;-webkit-text-stroke:0.18px #5c5c5c;">100%</div>
<svg style="left:1031.5px;top:438.29999999999995px;" width="5.4" height="3.4" viewBox="0 0 5.4 3.4"><path d="M0.2 0.3 L2.7 2.9 L5.2 0.3" fill="none" stroke="#5e5e5e" stroke-width="0.95"/></svg>
<div class="a" style="left:896px;top:449.5px;width:179px;height:1px;background:#4c4c4c;"></div>
<div class="t" style="left:899.4px;top:455.62px;font-size:7.5px;color:#787878;font-weight:normal;transform:scaleX(0.781);transform-origin:0 50%;-webkit-text-stroke:0.18px #787878;">Lock:</div>
<svg style="left:919.8px;top:455.3px;" width="8" height="8" viewBox="0 0 8 8"><rect x="0.4" y="0.4" width="7.2" height="7.2" fill="none" stroke="#c4c4c4" stroke-width="0.8" stroke-dasharray="1.2 0.8"/><rect x="2" y="2" width="2" height="2" fill="#c4c4c4"/><rect x="4" y="4" width="2" height="2" fill="#c4c4c4"/></svg>
<svg style="left:934.3px;top:454.8px;" width="8" height="9" viewBox="0 0 8 9"><path d="M7.4 0.8 L3.6 5.4" stroke="#c4c4c4" stroke-width="1.3" stroke-linecap="round"/><path d="M3.2 5.2 C2 5.2 2 6.8 0.6 8 C2.8 8.4 4.2 7.4 4 6 Z" fill="#c4c4c4"/></svg>
<svg style="left:947.5px;top:455px;" width="8.4" height="8.4" viewBox="0 0 8.4 8.4"><g transform="scale(0.84)"><path d="M5 0 L6.8 2.2 L5.5 2.2 L5.5 4.5 L7.8 4.5 L7.8 3.2 L10 5 L7.8 6.8 L7.8 5.5 L5.5 5.5 L5.5 7.8 L6.8 7.8 L5 10 L3.2 7.8 L4.5 7.8 L4.5 5.5 L2.2 5.5 L2.2 6.8 L0 5 L2.2 3.2 L2.2 4.5 L4.5 4.5 L4.5 2.2 L3.2 2.2 Z" fill="#c4c4c4"/></g></svg>
<svg style="left:961.2px;top:455.3px;" width="8.2" height="8" viewBox="0 0 8.2 8"><path d="M1.6 0 L1.6 8 M0 1.6 L6.4 1.6 L6.4 6.4 L0 6.4" fill="none" stroke="#c4c4c4" stroke-width="0.9"/><path d="M6.4 1.6 L8 1.6 M1.6 6.4 L1.6 8" stroke="#c4c4c4" stroke-width="0.9"/></svg>
<svg style="left:975.7px;top:454.6px;" width="7" height="9" viewBox="0 0 7 9"><rect x="0.3" y="3.8" width="6.4" height="5" rx="0.6" fill="#c4c4c4"/><path d="M1.7 3.8 L1.7 2.4 C1.7 0.2 5.3 0.2 5.3 2.4 L5.3 3.8" fill="none" stroke="#c4c4c4" stroke-width="1"/></svg>
<div class="t" style="left:996.4px;top:455.62px;font-size:7.5px;color:#787878;font-weight:normal;transform:scaleX(0.729);transform-origin:0 50%;-webkit-text-stroke:0.18px #787878;">Fill:</div>
<div class="a" style="left:1008.7px;top:453.8px;width:20.3px;height:10.8px;background:#474747;"></div>
<div class="t" style="left:1011px;top:455.87px;font-size:7px;color:#5c5c5c;font-weight:normal;transform:scaleX(0.838);transform-origin:0 50%;-webkit-text-stroke:0.18px #5c5c5c;">100%</div>
<svg style="left:1031.5px;top:457.7px;" width="5.4" height="3.4" viewBox="0 0 5.4 3.4"><path d="M0.2 0.3 L2.7 2.9 L5.2 0.3" fill="none" stroke="#5e5e5e" stroke-width="0.95"/></svg>
<div class="a" style="left:896px;top:468.5px;width:179px;height:1px;background:#484848;"></div>
<div class="a" style="left:915.4px;top:469px;width:1px;height:237px;background:#4c4c4c;"></div>
<div class="a" style="left:896px;top:486px;width:169px;height:1px;background:#4c4c4c;"></div>
<svg style="left:901.6px;top:476.0px;" width="8.6" height="5.4" viewBox="0 0 8.6 5.4"><path d="M0.3 2.7 C2 -0.3 6.6 -0.3 8.3 2.7 C6.6 5.7 2 5.7 0.3 2.7 Z" fill="#9c9c9c"/><circle cx="4.3" cy="2.7" r="1.35" fill="#535353"/></svg>
<svg style="left:926.4px;top:477.09999999999997px;" width="5.4" height="3.4" viewBox="0 0 5.4 3.4"><path d="M0.2 0.3 L2.7 2.9 L5.2 0.3" fill="none" stroke="#c0c0c0" stroke-width="0.95"/></svg>
<svg style="left:934.9px;top:475.09999999999997px;" width="9.2" height="7.4" viewBox="0 0 9.2 7.4"><path d="M0.3 0.3 L3.4 0.3 L4.4 1.5 L8.9 1.5 L8.9 7.1 L0.3 7.1 Z" fill="#e4e4e4"/><path d="M0.3 2.8 L8.9 2.8" stroke="#535353" stroke-width="0.7"/></svg>
<div class="t" style="left:951.3px;top:475.02px;font-size:7.5px;color:#ececec;font-weight:bold;transform:scaleX(0.750);transform-origin:0 50%;">edite text</div>
<div class="a" style="left:896px;top:515.2px;width:169px;height:1px;background:#4c4c4c;"></div>
<svg style="left:901.6px;top:498.8px;" width="8.6" height="5.4" viewBox="0 0 8.6 5.4"><path d="M0.3 2.7 C2 -0.3 6.6 -0.3 8.3 2.7 C6.6 5.7 2 5.7 0.3 2.7 Z" fill="#9c9c9c"/><circle cx="4.3" cy="2.7" r="1.35" fill="#535353"/></svg>
<div class="t" style="left:942.8px;top:495.9px;font-family:'Liberation Serif',serif;font-size:12.5px;color:#e8e8e8;-webkit-text-stroke:0.3px #e8e8e8">T</div>
<div class="t" style="left:962.8px;top:497.82px;font-size:7.5px;color:#e0e0e0;font-weight:normal;transform:scaleX(0.815);transform-origin:0 50%;-webkit-text-stroke:0.18px #e0e0e0;">Layer 2</div>
<div class="a" style="left:896px;top:543.7px;width:169px;height:1px;background:#4c4c4c;"></div>
<svg style="left:901.6px;top:527.0px;" width="8.6" height="5.4" viewBox="0 0 8.6 5.4"><path d="M0.3 2.7 C2 -0.3 6.6 -0.3 8.3 2.7 C6.6 5.7 2 5.7 0.3 2.7 Z" fill="#9c9c9c"/><circle cx="4.3" cy="2.7" r="1.35" fill="#535353"/></svg>
<div class="a" style="left:937.8px;top:519.5px;width:15.5px;height:20px;border:1px solid #e8e8e8;background:repeating-conic-gradient(#cfcfcf 0% 25%,#ffffff 0% 50%);background-size:4.6px 4.6px"></div>
<div class="a" style="left:940px;top:522.5px;width:2px;height:3.6px;background:#b0644e;"></div>
<div class="t" style="left:959.1px;top:526.03px;font-size:7.5px;color:#e0e0e0;font-weight:normal;transform:scaleX(0.815);transform-origin:0 50%;-webkit-text-stroke:0.18px #e0e0e0;">Layer 3</div>
<div class="a" style="left:896px;top:572.5px;width:169px;height:1px;background:#4c4c4c;"></div>
<svg style="left:901.6px;top:556.1999999999999px;" width="8.6" height="5.4" viewBox="0 0 8.6 5.4"><path d="M0.3 2.7 C2 -0.3 6.6 -0.3 8.3 2.7 C6.6 5.7 2 5.7 0.3 2.7 Z" fill="#9c9c9c"/><circle cx="4.3" cy="2.7" r="1.35" fill="#535353"/></svg>
<div class="t" style="left:942.8px;top:553.3px;font-family:'Liberation Serif',serif;font-size:12.5px;color:#e8e8e8;-webkit-text-stroke:0.3px #e8e8e8">T</div>
<div class="t" style="left:962.8px;top:555.23px;font-size:7.5px;color:#e0e0e0;font-weight:bold;transform:scaleX(0.853);transform-origin:0 50%;">citta0000000...&lt;&lt;&lt;&lt;&lt;&lt;&lt;&lt;0 d</div>
<div class="a" style="left:896px;top:600.6px;width:169px;height:1px;background:#4c4c4c;"></div>
<div class="a" style="left:902px;top:582.5px;width:7.5px;height:8.5px;background:#565656;border:1px solid #4e4e4e"></div>
<div class="t" style="left:942.8px;top:581.1px;font-family:'Liberation Serif',serif;font-size:12.5px;color:#e8e8e8;-webkit-text-stroke:0.3px #e8e8e8">T</div>
<div class="t" style="left:962.8px;top:583.03px;font-size:7.5px;color:#e0e0e0;font-weight:normal;transform:scaleX(0.823);transform-origin:0 50%;-webkit-text-stroke:0.18px #e0e0e0;">1ss</div>
<div class="a" style="left:896px;top:629px;width:169px;height:1px;background:#4c4c4c;"></div>
<svg style="left:901.6px;top:612.9px;" width="8.6" height="5.4" viewBox="0 0 8.6 5.4"><path d="M0.3 2.7 C2 -0.3 6.6 -0.3 8.3 2.7 C6.6 5.7 2 5.7 0.3 2.7 Z" fill="#9c9c9c"/><circle cx="4.3" cy="2.7" r="1.35" fill="#535353"/></svg>
<div class="t" style="left:942.8px;top:610.0px;font-family:'Liberation Serif',serif;font-size:12.5px;color:#e8e8e8;-webkit-text-stroke:0.3px #e8e8e8">T</div>
<div class="t" style="left:962.8px;top:611.93px;font-size:7.5px;color:#e0e0e0;font-weight:normal;transform:scaleX(0.783);transform-origin:0 50%;-webkit-text-stroke:0.18px #e0e0e0;">169</div>
<div class="a" style="left:896px;top:657.8px;width:169px;height:1px;background:#4c4c4c;"></div>
<svg style="left:901.6px;top:641.3px;" width="8.6" height="5.4" viewBox="0 0 8.6 5.4"><path d="M0.3 2.7 C2 -0.3 6.6 -0.3 8.3 2.7 C6.6 5.7 2 5.7 0.3 2.7 Z" fill="#9c9c9c"/><circle cx="4.3" cy="2.7" r="1.35" fill="#535353"/></svg>
<div class="t" style="left:942.8px;top:638.4px;font-family:'Liberation Serif',serif;font-size:12.5px;color:#e8e8e8;-webkit-text-stroke:0.3px #e8e8e8">T</div>
<div class="t" style="left:962.8px;top:640.33px;font-size:7.5px;color:#e0e0e0;font-weight:normal;transform:scaleX(0.736);transform-origin:0 50%;-webkit-text-stroke:0.18px #e0e0e0;">m</div>
<div class="a" style="left:896px;top:686.6px;width:169px;height:1px;background:#4c4c4c;"></div>
<svg style="left:901.6px;top:670.0px;" width="8.6" height="5.4" viewBox="0 0 8.6 5.4"><path d="M0.3 2.7 C2 -0.3 6.6 -0.3 8.3 2.7 C6.6 5.7 2 5.7 0.3 2.7 Z" fill="#9c9c9c"/><circle cx="4.3" cy="2.7" r="1.35" fill="#535353"/></svg>
<div class="t" style="left:942.8px;top:667.1px;font-family:'Liberation Serif',serif;font-size:12.5px;color:#e8e8e8;-webkit-text-stroke:0.3px #e8e8e8">T</div>
<div class="t" style="left:962.8px;top:669.03px;font-size:7.5px;color:#e0e0e0;font-weight:normal;transform:scaleX(0.773);transform-origin:0 50%;-webkit-text-stroke:0.18px #e0e0e0;">129 cm</div>
<svg style="left:901.6px;top:698.4px;" width="8.6" height="5.4" viewBox="0 0 8.6 5.4"><path d="M0.3 2.7 C2 -0.3 6.6 -0.3 8.3 2.7 C6.6 5.7 2 5.7 0.3 2.7 Z" fill="#9c9c9c"/><circle cx="4.3" cy="2.7" r="1.35" fill="#535353"/></svg>
<div class="t" style="left:942.8px;top:695.5px;font-family:'Liberation Serif',serif;font-size:12.5px;color:#e8e8e8;-webkit-text-stroke:0.3px #e8e8e8">T</div>
<div class="t" style="left:962.8px;top:697.43px;font-size:7.5px;color:#e0e0e0;font-weight:normal;transform:scaleX(0.762);transform-origin:0 50%;-webkit-text-stroke:0.18px #e0e0e0;">01.01.1990</div>
<div class="a" style="left:1065px;top:469px;width:10px;height:237px;background:#4a4a4a;"></div>
<div class="a" style="left:1066.7px;top:490.4px;width:6.4px;height:65.6px;background:#696969;"></div>
<svg style="left:1067.3px;top:475px;" width="5.6" height="3.2" viewBox="0 0 5.6 3.2"><path d="M0 3 L2.8 0.4 L5.6 3" fill="none" stroke="#8c8c8c" stroke-width="0.9"/></svg>
<div class="a" style="left:896px;top:705.6px;width:179px;height:1px;background:#474747;"></div>
<svg style="left:948.2px;top:711.8px;" width="9" height="5.2" viewBox="0 0 9 5.2"><rect x="0.5" y="0.5" width="4.4" height="4.2" rx="2" fill="none" stroke="#7a7a7a" stroke-width="0.9"/><rect x="4.1" y="0.5" width="4.4" height="4.2" rx="2" fill="none" stroke="#7a7a7a" stroke-width="0.9"/></svg>
<div class="t" style="left:966.5px;top:710.1px;font-family:'Liberation Serif',serif;font-style:italic;font-size:9px;color:#7a7a7a">fx</div>
<svg style="left:982.2px;top:710.6px;" width="8.6" height="7.6" viewBox="0 0 8.6 7.6"><rect x="0" y="0" width="8.6" height="7.6" fill="#e2e2e2"/><circle cx="4.3" cy="3.8" r="2.1" fill="#535353"/></svg>
<svg style="left:1000px;top:710.4px;" width="8" height="8" viewBox="0 0 8 8"><circle cx="4" cy="4" r="3.5" fill="none" stroke="#e2e2e2" stroke-width="0.9"/><path d="M4 0.5 A3.5 3.5 0 0 1 4 7.5 Z" fill="#e2e2e2" transform="rotate(45 4 4)"/></svg>
<svg style="left:1016.2px;top:710.8px;" width="8.6" height="7.2" viewBox="0 0 8.6 7.2"><path d="M0 0 L3.2 0 L4.2 1.3 L8.6 1.3 L8.6 7.2 L0 7.2 Z" fill="#e2e2e2"/></svg>
<svg style="left:1033.8px;top:710.2px;" width="7.4" height="8.4" viewBox="0 0 7.4 8.4"><rect x="0.5" y="0.5" width="6.4" height="7.4" fill="none" stroke="#e2e2e2" stroke-width="0.9"/><path d="M3.7 2.3 L3.7 6.1 M1.8 4.2 L5.6 4.2" stroke="#e2e2e2" stroke-width="0.9"/></svg>
<svg style="left:1050px;top:710.2px;" width="6.8" height="8.4" viewBox="0 0 6.8 8.4"><path d="M0 1.5 L6.8 1.5 M2.2 1.5 L2.2 0.4 L4.6 0.4 L4.6 1.5" fill="none" stroke="#7a7a7a" stroke-width="0.9"/><path d="M0.8 2.6 L1.3 8.1 L5.5 8.1 L6 2.6 Z" fill="#7a7a7a"/></svg>
<svg style="left:0;top:0" width="1080" height="720" viewBox="0 0 1080 720"><path d="M869.6 667.4 L859.5 667.4 L859.5 696.2 L869.6 696.2 M859.5 681.1999999999999 L868.2 681.1999999999999 M873.3 666.4 L873.3 697.2 M889.6 666.8 L874.2 682.3 M877.5 678.8 L891 697.0 M905.8 666.8 A11.2 15.000000000000034 0 1 0 905.81 666.8 Z M940.8 670.7 A11.4 15.000000000000034 0 1 0 941.7 691.8 L941.7 682.8 L934.2 682.8 M958.8 667.4 L947.8 667.4 L947.8 696.2 L958.8 696.2 M947.8 681.1999999999999 L957.4 681.1999999999999 M961.2 697.2 L974.3 667.6 L987.4 697.2 M965.6 686.6 L983 686.6" fill="none" stroke="#202020" stroke-width="2.1" stroke-linejoin="miter"/><rect x="991.6" y="692.8000000000001" width="4" height="4.4" fill="#202020"/><g fill="none" stroke="#78962c" stroke-width="4.2"><path d="M1011 668.6 A10 13.600000000000033 0 1 0 1011.01 668.6 Z"/><path d="M1028.7 697.4000000000001 L1028.7 668.6 L1036 668.6 C1044.5 668.6 1044.5 682.4 1036 682.4 L1028.7 682.4 M1036.2 682.5999999999999 L1043.4 697.6"/><path d="M1063.9 671.7 A9.4 13.600000000000033 0 1 0 1064.6 690.9 L1064.6 682.8 L1057.6 682.8"/></g></svg>
</div></body></html>
